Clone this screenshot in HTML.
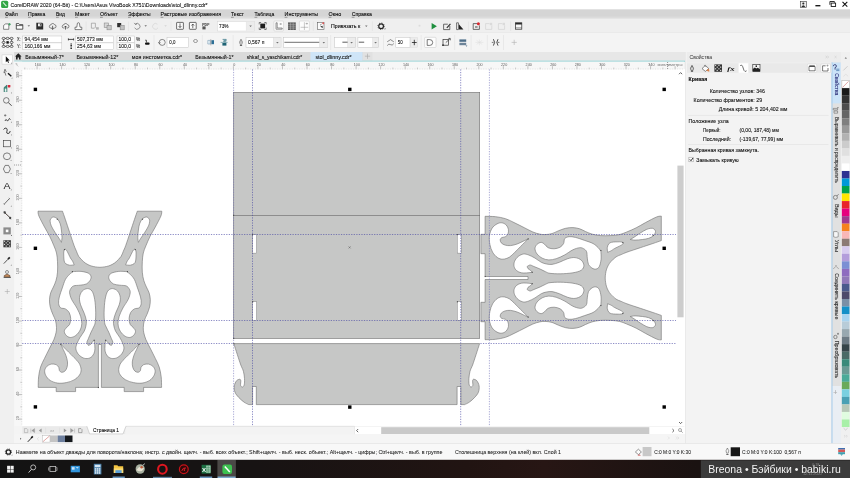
<!DOCTYPE html>
<html lang="ru"><head><meta charset="utf-8"><title>CorelDRAW 2020 - stol_dlinny.cdr</title>
<style>
html,body{margin:0;padding:0;background:#f0f0f0;}
body{width:850px;height:478px;overflow:hidden;position:relative;}
svg{position:absolute;left:0;top:0;display:block;will-change:transform;font-family:'Liberation Sans', sans-serif;}
text{white-space:pre;}
</style></head><body>
<svg width="850" height="478" viewBox="0 0 850 478">
<rect x="0.00" y="0.00" width="850.00" height="478.00" fill="#f0f0f0"/>
<rect x="0.00" y="0.00" width="850.00" height="9.40" fill="#ffffff"/>
<rect x="0.00" y="9.40" width="850.00" height="9.50" fill="#d5d5d5"/>
<rect x="0.00" y="16.20" width="850.00" height="1.00" fill="#d9d9d9"/>
<rect x="0.00" y="17.20" width="850.00" height="0.90" fill="#dedede"/>
<rect x="0.00" y="18.10" width="850.00" height="0.80" fill="#e6e6e6"/>
<rect x="0.00" y="18.90" width="850.00" height="13.60" fill="#efefef"/>
<rect x="0.00" y="32.50" width="850.00" height="19.50" fill="#f4f4f4"/>
<line x1="0.00" y1="32.50" x2="850.00" y2="32.50" stroke="#e2e2e2" stroke-width="0.50"/>
<rect x="14.10" y="52.00" width="671.00" height="8.70" fill="#e7e7e7"/>
<rect x="14.10" y="52.00" width="349.00" height="8.70" fill="#dadada"/>
<rect x="363.00" y="52.00" width="9.50" height="8.70" fill="#e1e1e1"/>
<rect x="14.10" y="60.70" width="671.00" height="1.00" fill="#86cfd3"/>
<rect x="0.00" y="52.00" width="14.10" height="392.00" fill="#f0f0f0"/>
<rect x="14.10" y="61.70" width="670.00" height="7.70" fill="#f7f7f7"/>
<rect x="14.10" y="61.70" width="8.10" height="365.00" fill="#f7f7f7"/>
<g id="canvas">
<rect x="22.20" y="69.40" width="663.10" height="357.20" fill="#ffffff"/>
<rect x="233.60" y="92.30" width="246.10" height="123.00" fill="#c6c7c6" stroke="#6e6e6e" stroke-width="0.60"/>
<rect x="233.60" y="215.30" width="246.10" height="123.10" fill="#c6c7c6" stroke="#6e6e6e" stroke-width="0.60"/>
<rect x="252.60" y="234.50" width="3.90" height="18.60" fill="#ffffff" stroke="#6e6e6e" stroke-width="0.40"/>
<rect x="252.60" y="301.70" width="3.90" height="18.70" fill="#ffffff" stroke="#6e6e6e" stroke-width="0.40"/>
<rect x="457.30" y="234.50" width="3.90" height="18.60" fill="#ffffff" stroke="#6e6e6e" stroke-width="0.40"/>
<rect x="457.30" y="301.70" width="3.90" height="18.70" fill="#ffffff" stroke="#6e6e6e" stroke-width="0.40"/>
<path d="M233.80 343.60 C234.38 345.42 236.13 350.93 237.30 354.50 C238.47 358.07 239.78 362.20 240.80 365.00 C241.82 367.80 242.78 369.03 243.40 371.30 C244.02 373.57 244.37 376.33 244.50 378.60 C244.63 380.87 244.55 383.50 244.20 384.90 C243.85 386.30 243.00 386.92 242.40 387.00 C241.80 387.08 240.87 386.45 240.60 385.40 C240.33 384.35 240.93 381.75 240.80 380.70 C240.67 379.65 239.97 379.37 239.80 379.10 C239.27 379.37 237.52 379.57 236.60 380.70 C235.68 381.83 234.57 383.98 234.30 385.90 C234.03 387.82 234.27 390.28 235.00 392.20 C235.73 394.12 237.20 395.75 238.70 397.40 C240.20 399.05 242.33 400.90 244.00 402.10 C245.67 403.30 247.92 404.18 248.70 404.60 L252.6 404.6 L252.6 386.5 L256.3 386.5 L256.3 404.6 L457.10 404.6 L457.10 386.5 L460.80 386.5 L460.80 404.6 L464.70 404.60 C465.48 404.18 467.73 403.30 469.40 402.10 C471.07 400.90 473.20 399.05 474.70 397.40 C476.20 395.75 477.67 394.12 478.40 392.20 C479.13 390.28 479.37 387.82 479.10 385.90 C478.83 383.98 477.72 381.83 476.80 380.70 C475.88 379.57 474.13 379.37 473.60 379.10 C473.43 379.37 472.73 379.65 472.60 380.70 C472.47 381.75 473.07 384.35 472.80 385.40 C472.53 386.45 471.60 387.08 471.00 387.00 C470.40 386.92 469.55 386.30 469.20 384.90 C468.85 383.50 468.77 380.87 468.90 378.60 C469.03 376.33 469.38 373.57 470.00 371.30 C470.62 369.03 471.58 367.80 472.60 365.00 C473.62 362.20 474.93 358.07 476.10 354.50 C477.27 350.93 479.02 345.42 479.60 343.60Z" fill="#c6c7c6" stroke="#6e6e6e" stroke-width="0.60"/>
<path id="orn" d="M62.50 211.20 C62.98 212.60 64.22 216.10 65.40 219.60 C66.58 223.10 68.15 227.87 69.60 232.20 C71.05 236.53 72.95 242.42 74.10 245.60 C75.25 248.78 75.72 249.48 76.50 251.30 C77.28 253.12 77.63 254.78 78.80 256.50 C79.97 258.22 82.13 260.33 83.50 261.60 C84.87 262.87 85.75 263.38 87.00 264.10 C88.25 264.82 89.58 265.43 91.00 265.90 C92.42 266.37 94.02 266.67 95.50 266.90 C96.98 267.13 98.43 267.30 99.90 267.30 C101.37 267.30 102.82 267.13 104.30 266.90 C105.78 266.67 107.38 266.37 108.80 265.90 C110.22 265.43 111.55 264.82 112.80 264.10 C114.05 263.38 114.93 262.87 116.30 261.60 C117.67 260.33 119.83 258.22 121.00 256.50 C122.17 254.78 122.52 253.12 123.30 251.30 C124.08 249.48 124.55 248.78 125.70 245.60 C126.85 242.42 128.75 236.53 130.20 232.20 C131.65 227.87 133.22 223.10 134.40 219.60 C135.58 216.10 136.82 212.60 137.30 211.20 L161.80 211.20 C161.65 212.00 161.98 213.37 160.90 216.00 C159.82 218.63 157.10 223.62 155.30 227.00 C153.50 230.38 151.67 233.17 150.10 236.30 C148.53 239.43 147.03 243.02 145.90 245.80 C144.77 248.58 143.90 250.35 143.30 253.00 C142.70 255.65 142.47 258.50 142.30 261.70 C142.13 264.90 142.05 269.07 142.30 272.20 C142.55 275.33 143.12 278.03 143.80 280.50 C144.48 282.97 145.52 284.95 146.40 287.00 C147.28 289.05 148.45 290.70 149.10 292.80 C149.75 294.90 150.22 297.25 150.30 299.60 C150.38 301.95 150.15 304.45 149.60 306.90 C149.05 309.35 147.88 312.03 147.00 314.30 C146.12 316.57 144.92 318.30 144.30 320.50 C143.68 322.70 143.38 325.45 143.30 327.50 C143.22 329.55 143.37 330.78 143.80 332.80 C144.23 334.82 144.85 337.07 145.90 339.60 C146.95 342.13 148.53 344.87 150.10 348.00 C151.67 351.13 153.78 355.23 155.30 358.40 C156.82 361.57 158.22 363.92 159.20 367.00 C160.18 370.08 160.80 373.50 161.20 376.90 C161.60 380.30 161.53 385.65 161.60 387.40 L143.60 387.40 L143.60 391.60 L124.20 391.60 L124.20 387.40 L101.40 387.40 L101.40 344.50 L98.40 344.50 L98.40 387.40 L75.60 387.40 L75.60 391.60 L56.20 391.60 L56.20 387.40 L38.20 387.40 C38.27 385.65 38.20 380.30 38.60 376.90 C39.00 373.50 39.62 370.08 40.60 367.00 C41.58 363.92 42.98 361.57 44.50 358.40 C46.02 355.23 48.13 351.13 49.70 348.00 C51.27 344.87 52.85 342.13 53.90 339.60 C54.95 337.07 55.57 334.82 56.00 332.80 C56.43 330.78 56.58 329.55 56.50 327.50 C56.42 325.45 56.12 322.70 55.50 320.50 C54.88 318.30 53.68 316.57 52.80 314.30 C51.92 312.03 50.75 309.35 50.20 306.90 C49.65 304.45 49.42 301.95 49.50 299.60 C49.58 297.25 50.05 294.90 50.70 292.80 C51.35 290.70 52.52 289.05 53.40 287.00 C54.28 284.95 55.32 282.97 56.00 280.50 C56.68 278.03 57.25 275.33 57.50 272.20 C57.75 269.07 57.67 264.90 57.50 261.70 C57.33 258.50 57.10 255.65 56.50 253.00 C55.90 250.35 55.03 248.58 53.90 245.80 C52.77 243.02 51.27 239.43 49.70 236.30 C48.13 233.17 46.30 230.38 44.50 227.00 C42.70 223.62 39.98 218.63 38.90 216.00 C37.82 213.37 38.15 212.00 38.00 211.20Z M53.40 217.00 C52.25 217.00 51.13 218.22 50.60 219.00 C50.07 219.78 50.08 220.55 50.20 221.70 C50.32 222.85 50.52 224.15 51.30 225.90 C52.08 227.65 53.60 230.12 54.90 232.20 C56.20 234.28 58.02 236.72 59.10 238.40 C60.18 240.08 61.02 241.65 61.40 242.30 C61.50 241.48 62.00 239.45 62.00 237.40 C62.00 235.35 61.70 232.27 61.40 230.00 C61.10 227.73 60.85 225.63 60.20 223.80 C59.55 221.97 58.63 220.13 57.50 219.00 C56.37 217.87 54.55 217.00 53.40 217.00Z M146.40 217.00 C147.55 217.00 148.67 218.22 149.20 219.00 C149.73 219.78 149.72 220.55 149.60 221.70 C149.48 222.85 149.28 224.15 148.50 225.90 C147.72 227.65 146.20 230.12 144.90 232.20 C143.60 234.28 141.78 236.72 140.70 238.40 C139.62 240.08 138.78 241.65 138.40 242.30 C138.30 241.48 137.80 239.45 137.80 237.40 C137.80 235.35 138.10 232.27 138.40 230.00 C138.70 227.73 138.95 225.63 139.60 223.80 C140.25 221.97 141.17 220.13 142.30 219.00 C143.43 217.87 145.25 217.00 146.40 217.00Z M64.30 249.60 C63.98 250.20 63.78 251.78 63.70 253.00 C63.62 254.22 63.72 255.57 63.80 256.90 C63.88 258.23 63.90 259.88 64.20 261.00 C64.50 262.12 64.73 262.90 65.60 263.60 C66.47 264.30 67.97 264.98 69.40 265.20 C70.83 265.42 73.40 264.95 74.20 264.90 C73.93 264.28 73.23 262.37 72.60 261.20 C71.97 260.03 71.28 259.50 70.40 257.90 C69.52 256.30 68.10 253.02 67.30 251.60 C66.50 250.18 66.10 249.73 65.60 249.40 C65.10 249.07 64.62 249.00 64.30 249.60Z M135.50 249.60 C135.82 250.20 136.02 251.78 136.10 253.00 C136.18 254.22 136.08 255.57 136.00 256.90 C135.92 258.23 135.90 259.88 135.60 261.00 C135.30 262.12 135.07 262.90 134.20 263.60 C133.33 264.30 131.83 264.98 130.40 265.20 C128.97 265.42 126.40 264.95 125.60 264.90 C125.87 264.28 126.57 262.37 127.20 261.20 C127.83 260.03 128.52 259.50 129.40 257.90 C130.28 256.30 131.70 253.02 132.50 251.60 C133.30 250.18 133.70 249.73 134.20 249.40 C134.70 249.07 135.18 249.00 135.50 249.60Z M73.20 271.60 C74.52 271.57 78.57 271.13 81.10 271.40 C83.63 271.67 86.75 272.35 88.40 273.20 C90.05 274.05 90.73 275.28 91.00 276.50 C91.27 277.72 90.78 279.25 90.00 280.50 C89.22 281.75 87.97 283.22 86.30 284.00 C84.63 284.78 82.12 284.88 80.00 285.20 C77.88 285.52 75.17 285.28 73.60 285.90 C72.03 286.52 71.27 287.75 70.60 288.90 C69.93 290.05 69.42 291.02 69.60 292.80 C69.78 294.58 70.48 297.07 71.70 299.60 C72.92 302.13 75.42 305.22 76.90 308.00 C78.38 310.78 79.78 313.68 80.60 316.30 C81.42 318.92 81.87 321.42 81.80 323.70 C81.73 325.98 81.18 328.05 80.20 330.00 C79.22 331.95 77.50 334.15 75.90 335.40 C74.30 336.65 72.18 337.47 70.60 337.50 C69.02 337.53 67.45 336.58 66.40 335.60 C65.35 334.62 64.40 332.82 64.30 331.60 C64.20 330.38 64.92 329.50 65.80 328.30 C66.68 327.10 68.78 326.05 69.60 324.40 C70.42 322.75 70.78 320.40 70.70 318.40 C70.62 316.40 69.98 313.98 69.10 312.40 C68.22 310.82 66.82 309.67 65.40 308.90 C63.98 308.13 61.73 308.70 60.60 307.80 C59.47 306.90 58.82 305.30 58.60 303.50 C58.38 301.70 58.68 299.60 59.30 297.00 C59.92 294.40 61.28 290.82 62.30 287.90 C63.32 284.98 64.18 281.77 65.40 279.50 C66.62 277.23 68.30 275.62 69.60 274.30 C70.90 272.98 72.60 272.05 73.20 271.60Z M126.60 271.60 C125.28 271.57 121.23 271.13 118.70 271.40 C116.17 271.67 113.05 272.35 111.40 273.20 C109.75 274.05 109.07 275.28 108.80 276.50 C108.53 277.72 109.02 279.25 109.80 280.50 C110.58 281.75 111.83 283.22 113.50 284.00 C115.17 284.78 117.68 284.88 119.80 285.20 C121.92 285.52 124.63 285.28 126.20 285.90 C127.77 286.52 128.53 287.75 129.20 288.90 C129.87 290.05 130.38 291.02 130.20 292.80 C130.02 294.58 129.32 297.07 128.10 299.60 C126.88 302.13 124.38 305.22 122.90 308.00 C121.42 310.78 120.02 313.68 119.20 316.30 C118.38 318.92 117.93 321.42 118.00 323.70 C118.07 325.98 118.62 328.05 119.60 330.00 C120.58 331.95 122.30 334.15 123.90 335.40 C125.50 336.65 127.62 337.47 129.20 337.50 C130.78 337.53 132.35 336.58 133.40 335.60 C134.45 334.62 135.40 332.82 135.50 331.60 C135.60 330.38 134.88 329.50 134.00 328.30 C133.12 327.10 131.02 326.05 130.20 324.40 C129.38 322.75 129.02 320.40 129.10 318.40 C129.18 316.40 129.82 313.98 130.70 312.40 C131.58 310.82 132.98 309.67 134.40 308.90 C135.82 308.13 138.07 308.70 139.20 307.80 C140.33 306.90 140.98 305.30 141.20 303.50 C141.42 301.70 141.12 299.60 140.50 297.00 C139.88 294.40 138.52 290.82 137.50 287.90 C136.48 284.98 135.62 281.77 134.40 279.50 C133.18 277.23 131.50 275.62 130.20 274.30 C128.90 272.98 127.20 272.05 126.60 271.60Z M87.40 288.60 C89.07 288.60 90.88 289.37 92.10 291.20 C93.32 293.03 94.10 296.10 94.70 299.60 C95.30 303.10 95.62 308.37 95.70 312.20 C95.78 316.03 95.55 320.13 95.20 322.60 C94.85 325.07 94.30 325.38 93.60 327.00 C92.90 328.62 91.87 330.37 91.00 332.30 C90.13 334.23 89.08 336.92 88.40 338.60 C87.72 340.28 86.90 341.27 86.90 342.40 C86.90 343.53 88.15 344.90 88.40 345.40 C88.75 345.25 89.85 345.08 90.50 344.50 C91.15 343.92 91.68 342.60 92.30 341.90 C92.92 341.20 93.88 340.57 94.20 340.30 C94.30 341.23 94.72 344.10 94.80 345.90 C94.88 347.70 95.07 349.45 94.70 351.10 C94.33 352.75 93.65 354.58 92.60 355.80 C91.55 357.02 89.97 358.05 88.40 358.40 C86.83 358.75 84.87 358.58 83.20 357.90 C81.53 357.22 79.62 355.78 78.40 354.30 C77.18 352.82 76.15 350.75 75.90 349.00 C75.65 347.25 76.22 345.72 76.90 343.80 C77.58 341.88 78.78 339.60 80.00 337.50 C81.22 335.40 83.22 333.12 84.20 331.20 C85.18 329.28 85.55 327.78 85.90 326.00 C86.25 324.22 86.58 322.63 86.30 320.50 C86.02 318.37 85.15 315.82 84.20 313.20 C83.25 310.58 81.38 307.42 80.60 304.80 C79.82 302.18 79.25 299.77 79.50 297.50 C79.75 295.23 80.78 292.68 82.10 291.20 C83.42 289.72 85.73 288.60 87.40 288.60Z M112.40 288.60 C110.73 288.60 108.92 289.37 107.70 291.20 C106.48 293.03 105.70 296.10 105.10 299.60 C104.50 303.10 104.18 308.37 104.10 312.20 C104.02 316.03 104.25 320.13 104.60 322.60 C104.95 325.07 105.50 325.38 106.20 327.00 C106.90 328.62 107.93 330.37 108.80 332.30 C109.67 334.23 110.72 336.92 111.40 338.60 C112.08 340.28 112.90 341.27 112.90 342.40 C112.90 343.53 111.65 344.90 111.40 345.40 C111.05 345.25 109.95 345.08 109.30 344.50 C108.65 343.92 108.12 342.60 107.50 341.90 C106.88 341.20 105.92 340.57 105.60 340.30 C105.50 341.23 105.08 344.10 105.00 345.90 C104.92 347.70 104.73 349.45 105.10 351.10 C105.47 352.75 106.15 354.58 107.20 355.80 C108.25 357.02 109.83 358.05 111.40 358.40 C112.97 358.75 114.93 358.58 116.60 357.90 C118.27 357.22 120.18 355.78 121.40 354.30 C122.62 352.82 123.65 350.75 123.90 349.00 C124.15 347.25 123.58 345.72 122.90 343.80 C122.22 341.88 121.02 339.60 119.80 337.50 C118.58 335.40 116.58 333.12 115.60 331.20 C114.62 329.28 114.25 327.78 113.90 326.00 C113.55 324.22 113.22 322.63 113.50 320.50 C113.78 318.37 114.65 315.82 115.60 313.20 C116.55 310.58 118.42 307.42 119.20 304.80 C119.98 302.18 120.55 299.77 120.30 297.50 C120.05 295.23 119.02 292.68 117.70 291.20 C116.38 289.72 114.07 288.60 112.40 288.60Z M60.80 344.30 C61.38 344.88 63.00 346.50 64.30 347.80 C65.60 349.10 66.97 350.47 68.60 352.10 C70.23 353.73 72.37 355.78 74.10 357.60 C75.83 359.42 77.83 361.02 79.00 363.00 C80.17 364.98 81.02 367.50 81.10 369.50 C81.18 371.50 80.67 373.27 79.50 375.00 C78.33 376.73 76.28 378.63 74.10 379.90 C71.92 381.17 69.13 382.07 66.40 382.60 C63.67 383.13 60.42 383.47 57.70 383.10 C54.98 382.73 52.08 381.67 50.10 380.40 C48.12 379.13 46.70 377.13 45.80 375.50 C44.90 373.87 44.52 372.13 44.70 370.60 C44.88 369.07 45.82 367.38 46.90 366.30 C47.98 365.22 49.67 364.38 51.20 364.10 C52.73 363.82 54.83 364.05 56.10 364.60 C57.37 365.15 58.25 366.40 58.80 367.40 C59.35 368.40 58.93 369.78 59.40 370.60 C59.87 371.42 60.70 372.20 61.60 372.30 C62.50 372.40 63.90 372.02 64.80 371.20 C65.70 370.38 66.55 368.95 67.00 367.40 C67.45 365.85 67.68 363.90 67.50 361.90 C67.32 359.90 66.62 357.48 65.90 355.40 C65.18 353.32 64.05 351.25 63.20 349.40 C62.35 347.55 61.20 345.15 60.80 344.30Z M139.00 344.30 C138.42 344.88 136.80 346.50 135.50 347.80 C134.20 349.10 132.83 350.47 131.20 352.10 C129.57 353.73 127.43 355.78 125.70 357.60 C123.97 359.42 121.97 361.02 120.80 363.00 C119.63 364.98 118.78 367.50 118.70 369.50 C118.62 371.50 119.13 373.27 120.30 375.00 C121.47 376.73 123.52 378.63 125.70 379.90 C127.88 381.17 130.67 382.07 133.40 382.60 C136.13 383.13 139.38 383.47 142.10 383.10 C144.82 382.73 147.72 381.67 149.70 380.40 C151.68 379.13 153.10 377.13 154.00 375.50 C154.90 373.87 155.28 372.13 155.10 370.60 C154.92 369.07 153.98 367.38 152.90 366.30 C151.82 365.22 150.13 364.38 148.60 364.10 C147.07 363.82 144.97 364.05 143.70 364.60 C142.43 365.15 141.55 366.40 141.00 367.40 C140.45 368.40 140.87 369.78 140.40 370.60 C139.93 371.42 139.10 372.20 138.20 372.30 C137.30 372.40 135.90 372.02 135.00 371.20 C134.10 370.38 133.25 368.95 132.80 367.40 C132.35 365.85 132.12 363.90 132.30 361.90 C132.48 359.90 133.18 357.48 133.90 355.40 C134.62 353.32 135.75 351.25 136.60 349.40 C137.45 347.55 138.60 345.15 139.00 344.30Z" fill="#c6c7c6" stroke="#6e6e6e" stroke-width="0.6" fill-rule="evenodd"/>
<use href="#orn" transform="translate(872.5 178.1) rotate(90)"/>
<line x1="22.20" y1="234.50" x2="676.00" y2="234.50" stroke="#4646a2" stroke-width="0.62" stroke-dasharray="1.25 1.3"/>
<line x1="22.20" y1="320.50" x2="676.00" y2="320.50" stroke="#4646a2" stroke-width="0.62" stroke-dasharray="1.25 1.3"/>
<line x1="22.20" y1="343.50" x2="233.40" y2="343.50" stroke="#4646a2" stroke-width="0.62" stroke-dasharray="1.25 1.3"/>
<line x1="480.40" y1="343.50" x2="676.00" y2="343.50" stroke="#4646a2" stroke-width="0.62" stroke-dasharray="1.25 1.3"/>
<line x1="233.60" y1="69.40" x2="233.60" y2="426.60" stroke="#7676bc" stroke-width="0.62" stroke-dasharray="1.25 1.3"/>
<line x1="252.50" y1="69.40" x2="252.50" y2="426.60" stroke="#4646a2" stroke-width="0.62" stroke-dasharray="1.25 1.3"/>
<line x1="460.70" y1="69.40" x2="460.70" y2="426.60" stroke="#4646a2" stroke-width="0.62" stroke-dasharray="1.25 1.3"/>
<line x1="489.40" y1="69.40" x2="489.40" y2="426.60" stroke="#7676bc" stroke-width="0.62" stroke-dasharray="1.25 1.3"/>
<rect x="33.70" y="87.70" width="3.40" height="3.40" fill="#000"/>
<rect x="348.10" y="87.70" width="3.40" height="3.40" fill="#000"/>
<rect x="662.50" y="87.70" width="3.40" height="3.40" fill="#000"/>
<rect x="33.70" y="246.60" width="3.40" height="3.40" fill="#000"/>
<rect x="662.50" y="246.60" width="3.40" height="3.40" fill="#000"/>
<rect x="33.70" y="405.20" width="3.40" height="3.40" fill="#000"/>
<rect x="348.10" y="405.40" width="3.40" height="3.40" fill="#000"/>
<rect x="662.50" y="405.30" width="3.40" height="3.40" fill="#000"/>
<rect x="233.05" y="214.75" width="1.10" height="1.10" fill="#4a4a4a"/>
<rect x="252.15" y="234.05" width="1.10" height="1.10" fill="#4a4a4a"/>
<rect x="456.85" y="234.05" width="1.10" height="1.10" fill="#4a4a4a"/>
<rect x="252.15" y="301.25" width="1.10" height="1.10" fill="#4a4a4a"/>
<rect x="456.85" y="301.25" width="1.10" height="1.10" fill="#4a4a4a"/>
<rect x="233.15" y="337.85" width="1.10" height="1.10" fill="#4a4a4a"/>
<rect x="233.25" y="343.15" width="1.10" height="1.10" fill="#4a4a4a"/>
<rect x="97.85" y="386.95" width="1.10" height="1.10" fill="#4a4a4a"/>
<rect x="484.65" y="275.95" width="1.10" height="1.10" fill="#4a4a4a"/>
<rect x="60.25" y="343.75" width="1.10" height="1.10" fill="#4a4a4a"/>
<rect x="138.45" y="343.75" width="1.10" height="1.10" fill="#4a4a4a"/>
<rect x="63.95" y="249.05" width="1.10" height="1.10" fill="#4a4a4a"/>
<rect x="134.75" y="249.05" width="1.10" height="1.10" fill="#4a4a4a"/>
<rect x="71.85" y="271.05" width="1.10" height="1.10" fill="#4a4a4a"/>
<rect x="126.85" y="271.05" width="1.10" height="1.10" fill="#4a4a4a"/>
<rect x="93.65" y="339.75" width="1.10" height="1.10" fill="#4a4a4a"/>
<rect x="105.05" y="339.75" width="1.10" height="1.10" fill="#4a4a4a"/>
<rect x="56.75" y="218.65" width="1.10" height="1.10" fill="#4a4a4a"/>
<rect x="141.95" y="218.65" width="1.10" height="1.10" fill="#4a4a4a"/>
<rect x="527.65" y="238.35" width="1.10" height="1.10" fill="#4a4a4a"/>
<rect x="527.65" y="316.55" width="1.10" height="1.10" fill="#4a4a4a"/>
<rect x="622.25" y="242.05" width="1.10" height="1.10" fill="#4a4a4a"/>
<rect x="622.25" y="312.85" width="1.10" height="1.10" fill="#4a4a4a"/>
<rect x="600.35" y="249.95" width="1.10" height="1.10" fill="#4a4a4a"/>
<rect x="600.35" y="304.95" width="1.10" height="1.10" fill="#4a4a4a"/>
<rect x="531.65" y="271.75" width="1.10" height="1.10" fill="#4a4a4a"/>
<rect x="531.65" y="283.15" width="1.10" height="1.10" fill="#4a4a4a"/>
<rect x="652.65" y="234.85" width="1.10" height="1.10" fill="#4a4a4a"/>
<rect x="652.65" y="320.05" width="1.10" height="1.10" fill="#4a4a4a"/>
<path d="M348.6 246.4 l2 2 m0 -2 l-2 2" fill="none" stroke="#555" stroke-width="0.50"/>
</g>
<rect x="676.30" y="69.40" width="9.00" height="357.00" fill="#ffffff"/>
<rect x="677.40" y="165.60" width="6.20" height="151.70" fill="#cdcdcd"/>
<rect x="22.20" y="426.20" width="662.00" height="8.00" fill="#eaeaea"/>
<rect x="14.10" y="426.20" width="8.10" height="8.00" fill="#f4f4f4"/>
<rect x="125.20" y="426.20" width="229.30" height="8.00" fill="#f3f3f3"/>
<rect x="354.50" y="426.60" width="330.80" height="7.60" fill="#ffffff"/>
<rect x="381.20" y="427.20" width="268.10" height="6.80" fill="#c9c9c9"/>
<rect x="14.10" y="434.20" width="671.20" height="9.30" fill="#f5f5f5"/>
<line x1="125.20" y1="426.30" x2="354.50" y2="426.30" stroke="#cfcfcf" stroke-width="0.45"/>
<line x1="354.50" y1="426.20" x2="354.50" y2="434.20" stroke="#d8d8d8" stroke-width="0.40"/>
<rect x="685.30" y="52.00" width="146.30" height="391.50" fill="#f3f3f3"/>
<line x1="685.50" y1="52.00" x2="685.50" y2="443.50" stroke="#e0e0e0" stroke-width="0.50"/>
<rect x="686.80" y="52.00" width="154.40" height="10.60" fill="#ececec"/>
<rect x="831.60" y="62.50" width="9.60" height="381.00" fill="#e1e1e1"/>
<rect x="831.60" y="62.50" width="9.60" height="40.90" fill="#cbe3f8"/>
<rect x="831.60" y="386.00" width="9.60" height="57.50" fill="#e9eef4"/>
<line x1="832.00" y1="62.50" x2="832.00" y2="443.50" stroke="#a5cbea" stroke-width="1.00"/>
<rect x="840.80" y="52.00" width="9.20" height="391.50" fill="#f0f0f0"/>
<rect x="0.00" y="443.50" width="850.00" height="16.30" fill="#f8f8f8"/>
<line x1="0.00" y1="443.50" x2="850.00" y2="443.50" stroke="#dcdcdc" stroke-width="0.50"/>
<defs><linearGradient id="tb" x1="0" y1="0" x2="1" y2="0"><stop offset="0" stop-color="#131313"/><stop offset="0.3" stop-color="#171313"/><stop offset="0.55" stop-color="#211412"/><stop offset="0.64" stop-color="#271614"/><stop offset="0.82" stop-color="#1a1211"/><stop offset="1" stop-color="#151212"/></linearGradient></defs>
<rect x="0.00" y="459.80" width="850.00" height="18.20" fill="url(#tb)"/>
<rect x="700.80" y="460.30" width="149.20" height="17.70" fill="#3b3b3b"/>
<rect x="841.90" y="80.60" width="7.50" height="7.53" fill="#ffffff" stroke="#999" stroke-width="0.40"/>
<line x1="842.60" y1="87.33" x2="848.50" y2="81.40" stroke="#c0504d" stroke-width="0.50"/>
<rect x="841.80" y="88.13" width="7.70" height="7.58" fill="#1a1a1a"/>
<rect x="841.80" y="95.66" width="7.70" height="7.58" fill="#333333"/>
<rect x="841.80" y="103.19" width="7.70" height="7.58" fill="#4d4d4d"/>
<rect x="841.80" y="110.72" width="7.70" height="7.58" fill="#666666"/>
<rect x="841.80" y="118.25" width="7.70" height="7.58" fill="#7f7f7f"/>
<rect x="841.80" y="125.78" width="7.70" height="7.58" fill="#999999"/>
<rect x="841.80" y="133.31" width="7.70" height="7.58" fill="#b2b2b2"/>
<rect x="841.80" y="140.84" width="7.70" height="7.58" fill="#cccccc"/>
<rect x="841.80" y="148.37" width="7.70" height="7.58" fill="#e0e0e0"/>
<rect x="841.80" y="155.90" width="7.70" height="7.58" fill="#eeeeee"/>
<rect x="841.80" y="163.43" width="7.70" height="7.58" fill="#ffffff"/>
<rect x="841.80" y="170.96" width="7.70" height="7.58" fill="#2e3192"/>
<rect x="841.80" y="178.49" width="7.70" height="7.58" fill="#0099d8"/>
<rect x="841.80" y="186.02" width="7.70" height="7.58" fill="#00a14b"/>
<rect x="841.80" y="193.55" width="7.70" height="7.58" fill="#ffe600"/>
<rect x="841.80" y="201.08" width="7.70" height="7.58" fill="#e8262a"/>
<rect x="841.80" y="208.61" width="7.70" height="7.58" fill="#e6007e"/>
<rect x="841.80" y="216.14" width="7.70" height="7.58" fill="#a0398f"/>
<rect x="841.80" y="223.67" width="7.70" height="7.58" fill="#f5821f"/>
<rect x="841.80" y="231.20" width="7.70" height="7.58" fill="#f9b7b7"/>
<rect x="841.80" y="238.73" width="7.70" height="7.58" fill="#8c7b75"/>
<rect x="841.80" y="246.26" width="7.70" height="7.58" fill="#d8ccf0"/>
<rect x="841.80" y="253.79" width="7.70" height="7.58" fill="#b39ddb"/>
<rect x="841.80" y="261.32" width="7.70" height="7.58" fill="#7b8fd4"/>
<rect x="841.80" y="268.85" width="7.70" height="7.58" fill="#8e6bbf"/>
<rect x="841.80" y="276.38" width="7.70" height="7.58" fill="#9078b8"/>
<rect x="841.80" y="283.91" width="7.70" height="7.58" fill="#4a5a8c"/>
<rect x="841.80" y="291.44" width="7.70" height="7.58" fill="#4d4a6b"/>
<rect x="841.80" y="298.97" width="7.70" height="7.58" fill="#7a8fa6"/>
<rect x="841.80" y="306.50" width="7.70" height="7.58" fill="#1490c8"/>
<rect x="841.80" y="314.03" width="7.70" height="7.58" fill="#a8d4f0"/>
<rect x="841.80" y="321.56" width="7.70" height="7.58" fill="#b8ccd8"/>
<rect x="841.80" y="329.09" width="7.70" height="7.58" fill="#98a8b0"/>
<rect x="841.80" y="336.62" width="7.70" height="7.58" fill="#6c7a84"/>
<rect x="841.80" y="344.15" width="7.70" height="7.58" fill="#36454a"/>
<rect x="841.80" y="351.68" width="7.70" height="7.58" fill="#4a6a66"/>
<rect x="841.80" y="359.21" width="7.70" height="7.58" fill="#3a8a7a"/>
<rect x="841.80" y="366.74" width="7.70" height="7.58" fill="#6a9a94"/>
<rect x="841.80" y="374.27" width="7.70" height="7.58" fill="#4aaa98"/>
<rect x="841.80" y="381.80" width="7.70" height="7.58" fill="#6aaa5a"/>
<rect x="841.80" y="389.33" width="7.70" height="7.58" fill="#7ad0e0"/>
<rect x="841.80" y="396.86" width="7.70" height="7.58" fill="#4aa0b4"/>
<rect x="841.80" y="404.39" width="7.70" height="7.58" fill="#b8c8b8"/>
<rect x="841.80" y="411.92" width="7.70" height="7.58" fill="#e0fce0"/>
<rect x="841.80" y="419.45" width="7.70" height="7.58" fill="#a8f0a8"/>
<text x="10.60" y="7.10" font-size="5.90" fill="#141414" stroke="#141414" stroke-width="0.10" textLength="197.00" lengthAdjust="spacingAndGlyphs">CorelDRAW 2020 (64-Bit) - C:\Users\Asus VivoBook X751\Downloads\stol_dlinny.cdr*</text>
<text x="5.00" y="16.30" font-size="5.60" fill="#0a0a0a" stroke="#0a0a0a" stroke-width="0.10" textLength="12.80" lengthAdjust="spacingAndGlyphs">Файл</text>
<line x1="5.00" y1="17.30" x2="7.80" y2="17.30" stroke="#141414" stroke-width="0.35"/>
<text x="28.00" y="16.30" font-size="5.60" fill="#0a0a0a" stroke="#0a0a0a" stroke-width="0.10" textLength="17.30" lengthAdjust="spacingAndGlyphs">Правка</text>
<line x1="28.00" y1="17.30" x2="30.80" y2="17.30" stroke="#141414" stroke-width="0.35"/>
<text x="56.00" y="16.30" font-size="5.60" fill="#0a0a0a" stroke="#0a0a0a" stroke-width="0.10" textLength="9.00" lengthAdjust="spacingAndGlyphs">Вид</text>
<line x1="56.00" y1="17.30" x2="58.80" y2="17.30" stroke="#141414" stroke-width="0.35"/>
<text x="75.00" y="16.30" font-size="5.60" fill="#0a0a0a" stroke="#0a0a0a" stroke-width="0.10" textLength="14.80" lengthAdjust="spacingAndGlyphs">Макет</text>
<line x1="75.00" y1="17.30" x2="77.80" y2="17.30" stroke="#141414" stroke-width="0.35"/>
<text x="100.00" y="16.30" font-size="5.60" fill="#0a0a0a" stroke="#0a0a0a" stroke-width="0.10" textLength="17.80" lengthAdjust="spacingAndGlyphs">Объект</text>
<line x1="100.00" y1="17.30" x2="102.80" y2="17.30" stroke="#141414" stroke-width="0.35"/>
<text x="128.00" y="16.30" font-size="5.60" fill="#0a0a0a" stroke="#0a0a0a" stroke-width="0.10" textLength="22.50" lengthAdjust="spacingAndGlyphs">Эффекты</text>
<line x1="128.00" y1="17.30" x2="130.80" y2="17.30" stroke="#141414" stroke-width="0.35"/>
<text x="160.60" y="16.30" font-size="5.60" fill="#0a0a0a" stroke="#0a0a0a" stroke-width="0.10" textLength="60.40" lengthAdjust="spacingAndGlyphs">Растровые изображения</text>
<line x1="160.60" y1="17.30" x2="163.40" y2="17.30" stroke="#141414" stroke-width="0.35"/>
<text x="231.00" y="16.30" font-size="5.60" fill="#0a0a0a" stroke="#0a0a0a" stroke-width="0.10" textLength="12.80" lengthAdjust="spacingAndGlyphs">Текст</text>
<line x1="231.00" y1="17.30" x2="233.80" y2="17.30" stroke="#141414" stroke-width="0.35"/>
<text x="254.50" y="16.30" font-size="5.60" fill="#0a0a0a" stroke="#0a0a0a" stroke-width="0.10" textLength="19.70" lengthAdjust="spacingAndGlyphs">Таблица</text>
<line x1="254.50" y1="17.30" x2="257.30" y2="17.30" stroke="#141414" stroke-width="0.35"/>
<text x="284.60" y="16.30" font-size="5.60" fill="#0a0a0a" stroke="#0a0a0a" stroke-width="0.10" textLength="33.60" lengthAdjust="spacingAndGlyphs">Инструменты</text>
<line x1="284.60" y1="17.30" x2="287.40" y2="17.30" stroke="#141414" stroke-width="0.35"/>
<text x="328.60" y="16.30" font-size="5.60" fill="#0a0a0a" stroke="#0a0a0a" stroke-width="0.10" textLength="12.60" lengthAdjust="spacingAndGlyphs">Окно</text>
<line x1="328.60" y1="17.30" x2="331.40" y2="17.30" stroke="#141414" stroke-width="0.35"/>
<text x="351.70" y="16.30" font-size="5.60" fill="#0a0a0a" stroke="#0a0a0a" stroke-width="0.10" textLength="20.30" lengthAdjust="spacingAndGlyphs">Справка</text>
<line x1="351.70" y1="17.30" x2="354.50" y2="17.30" stroke="#141414" stroke-width="0.35"/>
<rect x="217.60" y="21.70" width="36.60" height="9.30" fill="#ffffff" stroke="#cfcfcf" stroke-width="0.40"/>
<text x="219.00" y="27.90" font-size="5.50" fill="#141414" stroke="#141414" stroke-width="0.10" textLength="9.60" lengthAdjust="spacingAndGlyphs">73%</text>
<text x="331.00" y="27.90" font-size="5.30" fill="#0a0a0a" stroke="#0a0a0a" stroke-width="0.10" textLength="29.20" lengthAdjust="spacingAndGlyphs">Привязать к</text>
<rect x="22.70" y="36.00" width="39.10" height="6.90" fill="#ffffff" stroke="#bdbdbd" stroke-width="0.45"/>
<rect x="22.70" y="42.90" width="39.10" height="6.70" fill="#ffffff" stroke="#bdbdbd" stroke-width="0.45"/>
<rect x="75.50" y="36.00" width="38.20" height="6.90" fill="#ffffff" stroke="#bdbdbd" stroke-width="0.45"/>
<rect x="75.50" y="42.90" width="38.20" height="6.70" fill="#ffffff" stroke="#bdbdbd" stroke-width="0.45"/>
<rect x="117.00" y="36.00" width="17.30" height="6.90" fill="#ffffff" stroke="#bdbdbd" stroke-width="0.45"/>
<rect x="117.00" y="42.90" width="17.30" height="6.70" fill="#ffffff" stroke="#bdbdbd" stroke-width="0.45"/>
<text x="17.00" y="41.30" font-size="5.40" fill="#2a2a2a" stroke="#2a2a2a" stroke-width="0.10" textLength="3.60" lengthAdjust="spacingAndGlyphs">X:</text>
<text x="17.00" y="48.20" font-size="5.40" fill="#2a2a2a" stroke="#2a2a2a" stroke-width="0.10" textLength="3.60" lengthAdjust="spacingAndGlyphs">Y:</text>
<text x="24.50" y="41.30" font-size="5.40" fill="#141414" stroke="#141414" stroke-width="0.10" textLength="23.50" lengthAdjust="spacingAndGlyphs">94,454 мм</text>
<text x="24.50" y="48.20" font-size="5.40" fill="#141414" stroke="#141414" stroke-width="0.10" textLength="26.00" lengthAdjust="spacingAndGlyphs">160,166 мм</text>
<text x="77.00" y="41.30" font-size="5.40" fill="#141414" stroke="#141414" stroke-width="0.10" textLength="26.00" lengthAdjust="spacingAndGlyphs">507,373 мм</text>
<text x="77.00" y="48.20" font-size="5.40" fill="#141414" stroke="#141414" stroke-width="0.10" textLength="24.00" lengthAdjust="spacingAndGlyphs">254,63 мм</text>
<text x="118.60" y="41.30" font-size="5.40" fill="#141414" stroke="#141414" stroke-width="0.10" textLength="12.40" lengthAdjust="spacingAndGlyphs">100,0</text>
<text x="118.60" y="48.20" font-size="5.40" fill="#141414" stroke="#141414" stroke-width="0.10" textLength="12.40" lengthAdjust="spacingAndGlyphs">100,0</text>
<text x="136.00" y="41.30" font-size="5.40" fill="#2a2a2a" stroke="#2a2a2a" stroke-width="0.10" textLength="4.20" lengthAdjust="spacingAndGlyphs">%</text>
<text x="136.00" y="48.20" font-size="5.40" fill="#2a2a2a" stroke="#2a2a2a" stroke-width="0.10" textLength="4.20" lengthAdjust="spacingAndGlyphs">%</text>
<rect x="167.00" y="37.50" width="21.60" height="9.90" fill="#ffffff" stroke="#bdbdbd" stroke-width="0.45"/>
<text x="169.30" y="44.30" font-size="5.40" fill="#141414" stroke="#141414" stroke-width="0.10" textLength="6.10" lengthAdjust="spacingAndGlyphs">0,0</text>
<rect x="246.00" y="37.50" width="34.00" height="9.90" fill="#ffffff" stroke="#bdbdbd" stroke-width="0.45"/>
<text x="248.00" y="44.30" font-size="5.40" fill="#141414" stroke="#141414" stroke-width="0.10" textLength="16.40" lengthAdjust="spacingAndGlyphs">0,567 п</text>
<rect x="283.60" y="37.50" width="44.20" height="9.90" fill="#ffffff" stroke="#bdbdbd" stroke-width="0.45"/>
<rect x="334.70" y="37.50" width="20.60" height="9.90" fill="#ffffff" stroke="#bdbdbd" stroke-width="0.45"/>
<rect x="357.90" y="37.50" width="20.30" height="9.90" fill="#ffffff" stroke="#bdbdbd" stroke-width="0.45"/>
<rect x="395.80" y="37.50" width="14.20" height="9.90" fill="#ffffff" stroke="#bdbdbd" stroke-width="0.45"/>
<text x="397.80" y="44.30" font-size="5.40" fill="#141414" stroke="#141414" stroke-width="0.10" textLength="4.90" lengthAdjust="spacingAndGlyphs">50</text>
<rect x="310.50" y="52.00" width="52.00" height="8.60" fill="#cfe5f8"/>
<text x="25.20" y="58.50" font-size="5.50" fill="#141414" stroke="#141414" stroke-width="0.10" textLength="38.70" lengthAdjust="spacingAndGlyphs">Безымянный-7*</text>
<text x="76.60" y="58.50" font-size="5.50" fill="#141414" stroke="#141414" stroke-width="0.10" textLength="41.70" lengthAdjust="spacingAndGlyphs">Безымянный-12*</text>
<text x="131.80" y="58.50" font-size="5.50" fill="#141414" stroke="#141414" stroke-width="0.10" textLength="50.20" lengthAdjust="spacingAndGlyphs">моя инстометка.cdr*</text>
<text x="195.20" y="58.50" font-size="5.50" fill="#141414" stroke="#141414" stroke-width="0.10" textLength="38.40" lengthAdjust="spacingAndGlyphs">Безымянный-1*</text>
<text x="246.80" y="58.50" font-size="5.50" fill="#141414" stroke="#141414" stroke-width="0.10" textLength="55.40" lengthAdjust="spacingAndGlyphs">shkaf_s_yaschikami.cdr*</text>
<text x="315.40" y="58.50" font-size="5.50" fill="#141414" stroke="#141414" stroke-width="0.10" textLength="36.30" lengthAdjust="spacingAndGlyphs">stol_dlinny.cdr*</text>
<path d="M364.9 56.2 h5.2 M367.5 53.6 v5.2" fill="none" stroke="#a8a8a8" stroke-width="0.60"/>
<text x="689.60" y="59.00" font-size="5.30" fill="#2e2e2e" textLength="22.40" lengthAdjust="spacingAndGlyphs">Свойства</text>
<text x="688.60" y="81.40" font-size="5.30" fill="#0a0a0a" stroke="#0a0a0a" stroke-width="0.10" textLength="18.60" lengthAdjust="spacingAndGlyphs" font-weight="bold">Кривая</text>
<text x="709.70" y="92.90" font-size="5.35" fill="#141414" stroke="#141414" stroke-width="0.10" textLength="55.30" lengthAdjust="spacingAndGlyphs">Количество узлов: 346</text>
<text x="693.60" y="101.50" font-size="5.35" fill="#141414" stroke="#141414" stroke-width="0.10" textLength="68.60" lengthAdjust="spacingAndGlyphs">Количество фрагментов: 29</text>
<text x="718.70" y="110.60" font-size="5.35" fill="#141414" stroke="#141414" stroke-width="0.10" textLength="68.70" lengthAdjust="spacingAndGlyphs">Длина кривой: 5 204,402 мм</text>
<line x1="688.00" y1="115.40" x2="828.50" y2="115.40" stroke="#dcdcdc" stroke-width="0.50"/>
<text x="688.60" y="122.90" font-size="5.35" fill="#141414" stroke="#141414" stroke-width="0.10" textLength="40.10" lengthAdjust="spacingAndGlyphs">Положение узла</text>
<text x="703.00" y="131.70" font-size="5.35" fill="#141414" stroke="#141414" stroke-width="0.10" textLength="17.40" lengthAdjust="spacingAndGlyphs">Первый:</text>
<text x="739.50" y="131.70" font-size="5.35" fill="#141414" stroke="#141414" stroke-width="0.10" textLength="39.50" lengthAdjust="spacingAndGlyphs">(0,00, 187,48) мм</text>
<text x="703.00" y="140.70" font-size="5.35" fill="#141414" stroke="#141414" stroke-width="0.10" textLength="28.00" lengthAdjust="spacingAndGlyphs">Последний:</text>
<text x="739.50" y="140.70" font-size="5.35" fill="#141414" stroke="#141414" stroke-width="0.10" textLength="43.80" lengthAdjust="spacingAndGlyphs">(-139,67, 77,99) мм</text>
<line x1="688.00" y1="144.50" x2="828.50" y2="144.50" stroke="#dcdcdc" stroke-width="0.50"/>
<text x="688.60" y="152.40" font-size="5.35" fill="#141414" stroke="#141414" stroke-width="0.10" textLength="70.30" lengthAdjust="spacingAndGlyphs">Выбранная кривая замкнута.</text>
<rect x="688.90" y="157.20" width="4.60" height="4.60" fill="#ffffff" stroke="#8a8a8a" stroke-width="0.45"/>
<path d="M689.8 159.4 l1.2 1.3 l2.0 -2.7" fill="none" stroke="#000" stroke-width="0.85"/>
<text x="696.30" y="161.50" font-size="5.35" fill="#141414" stroke="#141414" stroke-width="0.10" textLength="42.50" lengthAdjust="spacingAndGlyphs">Замыкать кривую</text>
<text transform="translate(834.50 73.30) rotate(90)" font-size="5.30" fill="#2a2d78" stroke="#2a2d78" stroke-width="0.12" textLength="22.00" lengthAdjust="spacingAndGlyphs">Свойства</text>
<text transform="translate(834.50 117.00) rotate(90)" font-size="5.30" fill="#333" stroke="#333" stroke-width="0.12" textLength="66.00" lengthAdjust="spacingAndGlyphs">Выравнивать и распределить</text>
<text transform="translate(834.50 203.90) rotate(90)" font-size="5.30" fill="#333" stroke="#333" stroke-width="0.12" textLength="13.60" lengthAdjust="spacingAndGlyphs">Виды</text>
<text transform="translate(834.50 239.70) rotate(90)" font-size="5.30" fill="#333" stroke="#333" stroke-width="0.12" textLength="12.30" lengthAdjust="spacingAndGlyphs">Углы</text>
<text transform="translate(834.50 273.20) rotate(90)" font-size="5.30" fill="#333" stroke="#333" stroke-width="0.12" textLength="46.20" lengthAdjust="spacingAndGlyphs">Соединить кривые</text>
<text transform="translate(834.50 340.80) rotate(90)" font-size="5.30" fill="#333" stroke="#333" stroke-width="0.12" textLength="37.40" lengthAdjust="spacingAndGlyphs">Преобразовать</text>
<text x="833.20" y="395.20" font-size="7.00" fill="#aaa" stroke="#aaa" stroke-width="0.10">+</text>
<text x="15.80" y="454.20" font-size="5.20" fill="#141414" stroke="#141414" stroke-width="0.04" textLength="426.60" lengthAdjust="spacingAndGlyphs">Нажмите на объект дважды для поворота/наклона; инстр. с двойн. щелч. - выб. всех объект.; Shift+щелч. - выб. неск. объект.; Alt+щелч. - цифры; Ctrl+щелч. - выб. в группе</text>
<text x="455.00" y="454.20" font-size="5.20" fill="#141414" stroke="#141414" stroke-width="0.04" textLength="106.00" lengthAdjust="spacingAndGlyphs">Столешница верхняя (на клей) вкл. Слой 1</text>
<text x="654.20" y="454.00" font-size="5.20" fill="#141414" stroke="#141414" stroke-width="0.04" textLength="36.70" lengthAdjust="spacingAndGlyphs">C:0 M:0 Y:0 K:30</text>
<text x="742.00" y="454.00" font-size="5.20" fill="#141414" stroke="#141414" stroke-width="0.04" textLength="58.80" lengthAdjust="spacingAndGlyphs">C:0 M:0 Y:0 K:100  0,567 п</text>
<rect x="642.60" y="447.00" width="8.90" height="9.20" fill="#c8c8c8"/>
<rect x="730.70" y="447.30" width="9.30" height="8.90" fill="#161616"/>
<path d="M86.6 425.8 L89.6 433.9 L123.0 433.9 L126.2 425.8 Z" fill="#ffffff"/>
<path d="M86.8 426.2 L89.6 433.9 L123.0 433.9 L126.0 426.2" fill="none" stroke="#a9a9a9" stroke-width="0.45"/>
<text x="93.00" y="432.40" font-size="5.30" fill="#0a0a0a" stroke="#0a0a0a" stroke-width="0.10" textLength="26.00" lengthAdjust="spacingAndGlyphs">Страница 1</text>
<rect x="42.50" y="435.50" width="7.50" height="6.60" fill="#ffffff" stroke="#aaa" stroke-width="0.40"/>
<line x1="43.00" y1="441.60" x2="49.50" y2="436.00" stroke="#c0504d" stroke-width="0.50"/>
<rect x="50.00" y="435.50" width="7.70" height="6.60" fill="#c4c4c4"/>
<rect x="57.70" y="435.50" width="7.30" height="6.60" fill="#6d7f9e"/>
<rect x="65.00" y="435.50" width="7.50" height="6.60" fill="#14181c"/>
<text x="708.30" y="472.90" font-size="10.40" fill="#f4f4f4" textLength="132.40" lengthAdjust="spacingAndGlyphs">Breona • Бэйбики • babiki.ru</text>
<rect x="1.10" y="0.70" width="7.10" height="7.20" fill="#32a645" rx="1.50"/>
<path d="M3 2.4 L6.4 6.2" fill="none" stroke="#d8f2dc" stroke-width="1.10"/>
<rect x="800.30" y="1.30" width="6.00" height="6.00" fill="#ececec" stroke="#3c3c3c" stroke-width="0.60"/>
<circle cx="803.3" cy="3.5" r="1.05" fill="#2a2a2a"/>
<path d="M801.3 7.0 q2.0 -3.4 4.0 0 z" fill="#2a2a2a"/>
<rect x="815.40" y="5.00" width="5.00" height="1.40" fill="#1a1a1a"/>
<rect x="831.20" y="3.10" width="4.40" height="3.40" fill="#ffffff" stroke="#1a1a1a" stroke-width="0.90"/>
<path d="M829.9 4.8 V1.5 H834.4 V2.7" fill="none" stroke="#1a1a1a" stroke-width="0.90"/>
<path d="M842.5 1.8 l4.8 4.8 m0 -4.8 l-4.8 4.8" fill="none" stroke="#111" stroke-width="1.05"/>
<path d="M3.6 29.3 V25.4 L5.6 23.9 H8.8 V29.3 Z" fill="#fdfdfd" stroke="#3a3a3a" stroke-width="0.60"/>
<path d="M8.3 24.3 h2.6 M9.6 23 v2.6" fill="none" stroke="#2e9e57" stroke-width="0.80"/>
<path d="M16.3 29.2 V23.6 H18.8 L19.6 24.6 H22.8 V29.2 Z" fill="#fff" stroke="#2f2f2f" stroke-width="0.80"/>
<path d="M16.3 25.6 H22.8" fill="none" stroke="#2f2f2f" stroke-width="0.70"/>
<path d="M27.54 25.37 l2.52 0 l-1.26 1.47 z" fill="#707070"/>
<path d="M36.3 22.8 H42.2 L43.2 23.8 V29.4 H36.3 Z" fill="#2d2d2d"/>
<rect x="38.00" y="23.50" width="3.40" height="2.80" fill="#f2f2f2"/>
<rect x="39.90" y="23.80" width="0.90" height="1.90" fill="#2d2d2d"/>
<path d="M51.60 28.0 H50.70 a1.35 1.5 0 0 1 0 -3.0 a2.1 2.1 0 0 1 3.9 -0.3 a1.4 1.6 0 0 1 0 3.3 H53.60" fill="none" stroke="#3a3a3a" stroke-width="0.60"/>
<path d="M52.60 25.8 v3.5 m-1.1 -1.1 l1.1 1.2 l1.1 -1.2" fill="none" stroke="#222" stroke-width="0.65"/>
<path d="M64.50 28.0 H63.60 a1.35 1.5 0 0 1 0 -3.0 a2.1 2.1 0 0 1 3.9 -0.3 a1.4 1.6 0 0 1 0 3.3 H66.50" fill="none" stroke="#3a3a3a" stroke-width="0.60"/>
<path d="M65.50 29.6 v-3.5 m-1.1 1.1 l1.1 -1.2 l1.1 1.2" fill="none" stroke="#222" stroke-width="0.65"/>
<path d="M75 29.6 h6.8 v-2.4 h-1.8 l-0.5 -3.4 a1.1 1.1 0 0 0 -2.2 0 l-0.5 3.4 h-1.8 z" fill="#fafafa" stroke="#333" stroke-width="0.60"/>
<line x1="86.10" y1="21.50" x2="86.10" y2="31.00" stroke="#dcdcdc" stroke-width="0.50"/>
<path d="M91.4 23.2 h4 v4 l-1 1 h-3 z" fill="#f0f0f0" stroke="#8a8a8a" stroke-width="0.60"/>
<rect x="96.00" y="27.20" width="2.80" height="2.40" fill="#b5b5b5"/>
<rect x="104.20" y="23.00" width="4.20" height="4.40" fill="#d8d8d8" stroke="#8a8a8a" stroke-width="0.60"/>
<rect x="107.00" y="25.60" width="4.20" height="4.20" fill="#c9c9c9" stroke="#8a8a8a" stroke-width="0.60"/>
<rect x="117.20" y="23.00" width="4.00" height="4.20" fill="#2f2f2f"/>
<rect x="120.20" y="25.60" width="4.00" height="4.20" fill="#c2c2c2" stroke="#8a8a8a" stroke-width="0.60"/>
<line x1="128.50" y1="21.50" x2="128.50" y2="31.00" stroke="#dcdcdc" stroke-width="0.50"/>
<path d="M135.2 24.2 a2.9 2.9 0 1 1 -0.6 3.6" fill="none" stroke="#555" stroke-width="0.60"/>
<path d="M134.2 22.9 l1.2 1.5 l1.7 -0.6" fill="none" stroke="#555" stroke-width="0.60"/>
<path d="M144.44 25.37 l2.52 0 l-1.26 1.47 z" fill="#707070"/>
<path d="M157.4 24.2 a2.9 2.9 0 1 0 0.6 3.6" fill="none" stroke="#d0d0d0" stroke-width="0.60"/>
<path d="M164.34 25.37 l2.52 0 l-1.26 1.47 z" fill="#d4d4d4"/>
<line x1="171.00" y1="21.50" x2="171.00" y2="31.00" stroke="#dcdcdc" stroke-width="0.50"/>
<rect x="176.60" y="22.40" width="6.80" height="6.90" fill="#fbfbfb" stroke="#333" stroke-width="0.70" rx="0.50"/>
<path d="M180 23.4 v4 m-1.3 -1.3 l1.3 1.5 l1.3 -1.5" fill="none" stroke="#333" stroke-width="0.70"/>
<rect x="189.40" y="22.40" width="6.80" height="6.90" fill="#fbfbfb" stroke="#333" stroke-width="0.70" rx="0.50"/>
<path d="M192.8 28.2 v-4 m-1.3 1.3 l1.3 -1.5 l1.3 1.5" fill="none" stroke="#333" stroke-width="0.70"/>
<text x="202.20" y="25.60" font-size="3.60" fill="#333" textLength="7.30" lengthAdjust="spacingAndGlyphs" font-weight="bold">PDF</text>
<rect x="202.40" y="26.40" width="3.20" height="3.00" fill="#555"/>
<rect x="246.40" y="21.90" width="7.60" height="8.90" fill="#ececec"/>
<line x1="246.40" y1="21.90" x2="246.40" y2="30.80" stroke="#d6d6d6" stroke-width="0.40"/>
<path d="M249.34 25.57 l2.52 0 l-1.26 1.47 z" fill="#707070"/>
<rect x="260.30" y="23.60" width="4.80" height="4.80" fill="#1e1e1e"/>
<path d="M259.2 24.4 v-1.9 h1.9 M264.3 22.5 h1.9 v1.9 M266.2 27.6 v1.9 h-1.9 M261.1 29.5 h-1.9 v-1.9" fill="none" stroke="#333" stroke-width="0.60"/>
<rect x="273.90" y="21.00" width="9.60" height="10.00" fill="#fcfcfc" stroke="#c8c8c8" stroke-width="0.50" rx="1.00"/>
<path d="M276 22.8 v6.4 h6.2 M276 22.8 h1.2 v5.2 h5 v1.2" fill="none" stroke="#444" stroke-width="0.55"/>
<path d="M279.4 24 h2.6 m-1.3 -1 v2" fill="none" stroke="#777" stroke-width="0.45"/>
<rect x="288.00" y="22.40" width="7.80" height="7.60" fill="#5c5c5c"/>
<line x1="288.00" y1="24.30" x2="295.80" y2="24.30" stroke="#c9c9c9" stroke-width="0.45"/>
<line x1="288.00" y1="26.20" x2="295.80" y2="26.20" stroke="#c9c9c9" stroke-width="0.45"/>
<line x1="288.00" y1="28.10" x2="295.80" y2="28.10" stroke="#c9c9c9" stroke-width="0.45"/>
<line x1="290.60" y1="22.40" x2="290.60" y2="30.00" stroke="#c9c9c9" stroke-width="0.45"/>
<line x1="293.20" y1="22.40" x2="293.20" y2="30.00" stroke="#c9c9c9" stroke-width="0.45"/>
<rect x="299.40" y="21.00" width="10.00" height="10.00" fill="#fcfcfc" stroke="#c8c8c8" stroke-width="0.50" rx="1.00"/>
<path d="M300.6 27.3 h7.6 M304.4 22.2 v7.8" fill="none" stroke="#888" stroke-width="0.45"/>
<path d="M305.6 23.6 h2.4 m-1.2 -0.9 v1.8" fill="none" stroke="#777" stroke-width="0.45"/>
<line x1="313.30" y1="21.50" x2="313.30" y2="31.00" stroke="#dcdcdc" stroke-width="0.50"/>
<rect x="317.40" y="22.60" width="6.60" height="6.80" fill="#fbfbfb" stroke="#555" stroke-width="0.55"/>
<path d="M320.2 26.4 l2.6 1.9 l-0.2 -2.6 z" fill="#333"/>
<path d="M320 25.2 l1.6 -1" fill="none" stroke="#333" stroke-width="0.60"/>
<circle cx="323.2" cy="23.2" r="1.0" fill="#e05a5a"/>
<path d="M365.04 25.47 l2.52 0 l-1.26 1.47 z" fill="#707070"/>
<line x1="372.40" y1="21.50" x2="372.40" y2="31.00" stroke="#dcdcdc" stroke-width="0.50"/>
<circle cx="381.1" cy="26.2" r="2.35" fill="none" stroke="#222" stroke-width="1.15"/>
<circle cx="381.1" cy="26.2" r="3.25" fill="none" stroke="#222" stroke-width="0.8" stroke-dasharray="1.0 1.55"/>
<path d="M384.2 29.2 l1.2 0 l0 -1.2 z" fill="#333"/>
<path d="M431.6 23.0 L436.9 26.3 L431.6 29.6 Z" fill="#1f8f3e"/>
<path d="M443.6 24.2 h4.2 M443.6 24.2 v5.4 h6.2 v-3.6" fill="none" stroke="#333" stroke-width="0.70"/>
<path d="M446.4 27.4 l3.6 -4.0 l0.9 0.8 l-3.6 4 z" fill="#333"/>
<path d="M456.6 29.6 V22.8 H458.4 V29.6 Z" fill="#fafafa" stroke="#222" stroke-width="0.60"/>
<path d="M458.9 29.6 L458.9 24.2 L463.4 29.6 Z" fill="#222"/>
<line x1="468.50" y1="21.50" x2="468.50" y2="31.00" stroke="#dcdcdc" stroke-width="0.50"/>
<path d="M473.2 23.6 h4 M473.2 23.6 v5.8 h6.2 v-4" fill="none" stroke="#333" stroke-width="0.70"/>
<circle cx="478.4" cy="23.8" r="1.5" fill="#d9242b"/>
<path d="M475 26 h2.6 v2 h-2.6 z" fill="#999"/>
<path d="M485.60 23.6 h4 M485.60 23.6 v5.8 h6.2 v-4" fill="none" stroke="#d2d2d2" stroke-width="0.70"/>
<path d="M489.80 22.8 h2.4 v2.4 h-2.4z" fill="#dadada"/>
<path d="M498.40 23.6 h4 M498.40 23.6 v5.8 h6.2 v-4" fill="none" stroke="#d2d2d2" stroke-width="0.70"/>
<path d="M502.60 22.8 h2.4 v2.4 h-2.4z" fill="#dadada"/>
<line x1="510.60" y1="21.50" x2="510.60" y2="31.00" stroke="#dcdcdc" stroke-width="0.50"/>
<rect x="515.40" y="22.80" width="6.40" height="6.40" fill="#f8f8f8" stroke="#2a2a2a" stroke-width="0.70"/>
<rect x="515.40" y="22.80" width="6.40" height="1.70" fill="#2a2a2a"/>
<line x1="515.40" y1="27.80" x2="521.80" y2="27.80" stroke="#444" stroke-width="0.50"/>
<rect x="418.60" y="24.80" width="1.80" height="1.80" fill="#dcdcdc"/>
<ellipse cx="3.60" cy="38.40" rx="1.5" ry="1.05" fill="none" stroke="#111" stroke-width="0.6"/>
<ellipse cx="7.60" cy="38.40" rx="1.5" ry="1.05" fill="none" stroke="#111" stroke-width="0.6"/>
<ellipse cx="11.60" cy="38.40" rx="1.5" ry="1.05" fill="none" stroke="#111" stroke-width="0.6"/>
<ellipse cx="3.60" cy="42.40" rx="1.5" ry="1.05" fill="none" stroke="#111" stroke-width="0.6"/>
<rect x="6.40" y="41.20" width="2.40" height="2.40" fill="#111"/>
<ellipse cx="11.60" cy="42.40" rx="1.5" ry="1.05" fill="none" stroke="#111" stroke-width="0.6"/>
<ellipse cx="3.60" cy="46.40" rx="1.5" ry="1.05" fill="none" stroke="#111" stroke-width="0.6"/>
<ellipse cx="7.60" cy="46.40" rx="1.5" ry="1.05" fill="none" stroke="#111" stroke-width="0.6"/>
<ellipse cx="11.60" cy="46.40" rx="1.5" ry="1.05" fill="none" stroke="#111" stroke-width="0.6"/>
<path d="M5.1 38.4 h1 M9.1 38.4 h1 M5.1 46.4 h1 M9.1 46.4 h1 M3.6 39.5 v1.8 M3.6 43.5 v1.8 M11.6 39.5 v1.8 M11.6 43.5 v1.8" fill="none" stroke="#111" stroke-width="0.60"/>
<path d="M68.4 39.4 h5.2 M68.4 38.4 v2 M73.6 38.4 v2" fill="none" stroke="#222" stroke-width="0.80"/>
<path d="M71.2 43.6 v5.4" fill="none" stroke="#333" stroke-width="1.60" stroke-dasharray="1 0.5"/>
<rect x="145.00" y="42.40" width="4.60" height="2.40" fill="#111" rx="1.00"/>
<path d="M146.4 42.4 v-2.2 h-1.2" fill="none" stroke="#111" stroke-width="0.70"/>
<line x1="154.00" y1="35.00" x2="154.00" y2="50.00" stroke="#dcdcdc" stroke-width="0.50"/>
<circle cx="162.2" cy="42.4" r="3.0" fill="none" stroke="#333" stroke-width="0.55"/>
<path d="M158.4 42.0 l0.9 1.6 l1.2 -1.4" fill="none" stroke="#333" stroke-width="0.50"/>
<ellipse cx="195.5" cy="41.0" rx="2.0" ry="1.5" fill="none" stroke="#555" stroke-width="0.55"/>
<line x1="202.30" y1="35.00" x2="202.30" y2="50.00" stroke="#dcdcdc" stroke-width="0.50"/>
<path d="M207.8 40.4 h2.4 v3.6 h-2.4 z" fill="#e8f2f8" stroke="#6a8fa8" stroke-width="0.50"/>
<rect x="211.40" y="40.20" width="2.60" height="4.00" fill="#2d6f96"/>
<line x1="210.80" y1="39.20" x2="210.80" y2="45.40" stroke="#555" stroke-width="0.40"/>
<path d="M222.6 39.4 h3.6 v1.2 h-2.4 v1.2 h2.4" fill="none" stroke="#2a6f7f" stroke-width="0.70"/>
<rect x="222.40" y="43.00" width="4.00" height="2.60" fill="#1e6374"/>
<line x1="220.60" y1="42.40" x2="227.60" y2="42.40" stroke="#2a6f7f" stroke-width="0.50"/>
<line x1="233.20" y1="35.00" x2="233.20" y2="50.00" stroke="#dcdcdc" stroke-width="0.50"/>
<path d="M241 39.2 l1.4 2.8 l-0.6 2.4 h-1.6 l-0.6 -2.4 z" fill="#f4f4f4" stroke="#444" stroke-width="0.55"/>
<path d="M239.9 45.0 h2.2 v0.9 h-2.2z" fill="#555"/>
<line x1="241.00" y1="40.60" x2="241.00" y2="43.20" stroke="#444" stroke-width="0.40"/>
<rect x="273.30" y="37.70" width="7.80" height="9.50" fill="#ececec" stroke="#d6d6d6" stroke-width="0.40"/>
<path d="M276.14 42.07 l2.52 0 l-1.26 1.47 z" fill="#707070"/>
<line x1="284.40" y1="42.30" x2="319.60" y2="42.30" stroke="#333" stroke-width="0.70"/>
<rect x="319.60" y="37.70" width="8.20" height="9.50" fill="#ececec" stroke="#d6d6d6" stroke-width="0.40"/>
<path d="M322.54 42.07 l2.52 0 l-1.26 1.47 z" fill="#707070"/>
<line x1="330.70" y1="35.00" x2="330.70" y2="50.00" stroke="#dcdcdc" stroke-width="0.50"/>
<rect x="347.60" y="37.70" width="7.70" height="9.50" fill="#ececec" stroke="#d6d6d6" stroke-width="0.40"/>
<line x1="342.40" y1="42.20" x2="347.60" y2="42.20" stroke="#333" stroke-width="0.80"/>
<path d="M350.34 41.97 l2.52 0 l-1.26 1.47 z" fill="#707070"/>
<rect x="372.60" y="37.70" width="5.60" height="9.50" fill="#ececec" stroke="#d6d6d6" stroke-width="0.40"/>
<line x1="358.80" y1="42.20" x2="364.20" y2="42.20" stroke="#333" stroke-width="0.80"/>
<path d="M374.34 41.97 l2.52 0 l-1.26 1.47 z" fill="#707070"/>
<line x1="383.50" y1="35.00" x2="383.50" y2="50.00" stroke="#dcdcdc" stroke-width="0.50"/>
<path d="M387.2 41.8 l3.3 -2.2 l3.3 2.2 M387.2 45.6 q1.6 -2.4 3.3 -1 t3.3 -1" fill="none" stroke="#333" stroke-width="0.55"/>
<rect x="410.80" y="37.70" width="6.80" height="9.50" fill="#ececec" stroke="#d6d6d6" stroke-width="0.40"/>
<path d="M411.9 42.5 h4.8 M414.3 39.8 v5.4" fill="none" stroke="#222" stroke-width="0.80"/>
<line x1="421.20" y1="35.00" x2="421.20" y2="50.00" stroke="#dcdcdc" stroke-width="0.50"/>
<rect x="424.60" y="37.30" width="11.40" height="10.20" fill="#fdfdfd" stroke="#c4c4c4" stroke-width="0.50" rx="0.80"/>
<path d="M427.2 39.6 h2.6 a2.9 2.9 0 0 1 0 5.8 h-2.6 z" fill="none" stroke="#333" stroke-width="0.65"/>
<rect x="443.00" y="39.60" width="5.60" height="5.60" fill="none" stroke="#333" stroke-width="0.70"/>
<path d="M445.8 42.6 l4.2 -4 M448.4 38.4 h1.9 v1.9" fill="none" stroke="#333" stroke-width="0.70"/>
<rect x="442.20" y="44.40" width="1.60" height="1.60" fill="#333"/>
<line x1="454.70" y1="35.00" x2="454.70" y2="50.00" stroke="#dcdcdc" stroke-width="0.50"/>
<rect x="459.40" y="39.40" width="6.80" height="2.40" fill="#4f6f8a"/>
<rect x="459.40" y="42.80" width="6.80" height="2.40" fill="#6d8499"/>
<path d="M465.6 45.6 l1.8 0 l-0.9 1.2z" fill="#4f6f8a"/>
<line x1="471.10" y1="35.00" x2="471.10" y2="50.00" stroke="#dcdcdc" stroke-width="0.50"/>
<path d="M475.4 42.4 h8 M479.4 39.6 v5.6 M476.6 40.4 l5.6 4 M482.2 40.4 l-5.6 4" fill="none" stroke="#dcdcdc" stroke-width="0.50"/>
<line x1="487.30" y1="35.00" x2="487.30" y2="50.00" stroke="#dcdcdc" stroke-width="0.50"/>
<path d="M493.4 39.2 q2.4 3.2 0 6.4 M498.0 39.2 q-2.4 3.2 0 6.4" fill="none" stroke="#222" stroke-width="0.80"/>
<path d="M491.8 42.4 h1.8 M497.6 42.4 h1.8" fill="none" stroke="#222" stroke-width="0.60"/>
<line x1="503.50" y1="35.00" x2="503.50" y2="50.00" stroke="#dcdcdc" stroke-width="0.50"/>
<path d="M511.6 42.4 h5.2 M514.2 39.8 v5.2" fill="none" stroke="#b0b0b0" stroke-width="0.60"/>
<path d="M15.0 56.6 L18.3 53.3 L21.6 56.6 H20.6 V59.4 H19.0 V57.4 H17.6 V59.4 H16.0 V56.6 Z" fill="#222"/>
<rect x="2.00" y="54.90" width="10.30" height="9.20" fill="#ffffff" stroke="#c9c9c9" stroke-width="0.50"/>
<path d="M5.8 56.2 L5.8 62.2 L7.2 60.9 L8.2 63.0 L9.0 62.6 L8.0 60.6 L9.8 60.4 Z" fill="#111"/>
<path d="M11.0 63.6 l1.0 0 l0 -1.0 z" fill="#444"/>
<path d="M5.0 69.2 L3.9 72.6 L4.9 72.2 L5.9 75.6" fill="none" stroke="#333" stroke-width="0.60"/>
<path d="M5.0 69.2 L6.3 72.0" fill="none" stroke="#333" stroke-width="0.60"/>
<line x1="8.00" y1="73.20" x2="11.30" y2="76.20" stroke="#1a1a1a" stroke-width="1.40"/>
<path d="M11.4 78.6 l1.0 0 l0 -1.0 z" fill="#444"/>
<path d="M4.0 92.0 V87.6 L7.0 85.0 V92.0" fill="#3f8f80" stroke="#2c5f58" stroke-width="0.50"/>
<rect x="4.80" y="88.60" width="1.60" height="3.20" fill="#e8f4f0"/>
<rect x="7.80" y="85.00" width="2.60" height="2.40" fill="#d9293a" rx="0.60"/>
<path d="M11.0 93.2 l1.0 0 l0 -1.0 z" fill="#444"/>
<circle cx="6.3" cy="100.4" r="2.8" fill="none" stroke="#333" stroke-width="0.6"/>
<line x1="8.40" y1="102.60" x2="11.60" y2="105.80" stroke="#333" stroke-width="0.90"/>
<path d="M4.0 115.4 h2.4 M5.2 114.2 v2.4" fill="none" stroke="#333" stroke-width="0.50"/>
<path d="M5.0 121.0 q0.8 -2.6 1.8 -0.8 t1.8 -0.6 t1.8 0.2" fill="none" stroke="#222" stroke-width="0.80"/>
<path d="M11.0 122.6 l1.0 0 l0 -1.0 z" fill="#444"/>
<path d="M3.6 129.6 q1.4 -2.6 3.0 -1.2 q1.2 1.4 0.2 3.2 q-0.6 1.8 1.2 2.0 q2.0 -0.2 2.2 -2.6" fill="none" stroke="#222" stroke-width="0.85"/>
<path d="M11.0 135.2 l1.0 0 l0 -1.0 z" fill="#444"/>
<rect x="3.60" y="140.60" width="7.00" height="6.20" fill="none" stroke="#333" stroke-width="0.60"/>
<path d="M11.0 148.2 l1.0 0 l0 -1.0 z" fill="#444"/>
<ellipse cx="7.0" cy="156.3" rx="3.6" ry="3.4" fill="none" stroke="#333" stroke-width="0.6"/>
<path d="M10.4 160.8 l1.0 0 l0 -1.0 z" fill="#444"/>
<path d="M3.4 169.0 L5.2 165.4 H8.6 L10.4 169.0 L8.6 172.6 H5.2 Z" fill="none" stroke="#333" stroke-width="0.60"/>
<path d="M10.4 174.0 l1.0 0 l0 -1.0 z" fill="#444"/>
<text x="3.40" y="188.80" font-size="9.40" fill="#222" textLength="7.00" lengthAdjust="spacingAndGlyphs">A</text>
<path d="M10.6 190.2 l1.0 0 l0 -1.0 z" fill="#444"/>
<line x1="4.20" y1="204.20" x2="9.40" y2="198.60" stroke="#333" stroke-width="0.70"/>
<path d="M8.8 198.0 l1.2 1.2 M3.6 203.6 l1.2 1.2" fill="none" stroke="#333" stroke-width="0.50"/>
<path d="M10.6 206.6 l1.0 0 l0 -1.0 z" fill="#444"/>
<line x1="4.20" y1="212.20" x2="10.80" y2="218.40" stroke="#3a2f2a" stroke-width="0.90"/>
<path d="M3.4 211.4 l2.2 0.2 l-0.4 1.8 z M11.6 219.2 l-2.2 -0.2 l0.4 -1.8 z" fill="#333"/>
<circle cx="4.6" cy="212.6" r="1.1" fill="#444"/>
<circle cx="10.2" cy="217.8" r="1.1" fill="#444"/>
<rect x="3.40" y="227.40" width="7.40" height="7.00" fill="#8c8c8c"/>
<rect x="5.80" y="229.60" width="2.60" height="2.60" fill="#ffffff"/>
<path d="M10.8 236.0 l1.2 0 l0 -1.2 z" fill="#444"/>
<rect x="3.40" y="240.20" width="7.50" height="7.10" fill="#3a3a3a"/>
<rect x="3.90" y="240.70" width="1.20" height="1.15" fill="#d8d8d8"/>
<rect x="7.30" y="240.70" width="1.20" height="1.15" fill="#d8d8d8"/>
<rect x="5.60" y="242.30" width="1.20" height="1.15" fill="#d8d8d8"/>
<rect x="9.00" y="242.30" width="1.20" height="1.15" fill="#d8d8d8"/>
<rect x="3.90" y="243.90" width="1.20" height="1.15" fill="#d8d8d8"/>
<rect x="7.30" y="243.90" width="1.20" height="1.15" fill="#d8d8d8"/>
<rect x="5.60" y="245.50" width="1.20" height="1.15" fill="#d8d8d8"/>
<rect x="9.00" y="245.50" width="1.20" height="1.15" fill="#d8d8d8"/>
<line x1="3.80" y1="263.60" x2="8.00" y2="259.20" stroke="#444" stroke-width="0.90"/>
<path d="M7.4 258.6 l1.8 -1.8 l1.2 1.2 l-1.8 1.8 z" fill="#222"/>
<path d="M10.6 265.6 l1.0 0 l0 -1.0 z" fill="#444"/>
<path d="M4.2 275.6 q2.8 -2.6 5.8 0 v1.6 h-5.8z" fill="#c58a5a" stroke="#4a3a30" stroke-width="0.50"/>
<circle cx="7.0" cy="272.0" r="1.5" fill="#f0f0f0" stroke="#333" stroke-width="0.5"/>
<path d="M3.6 277.4 h7.4" fill="none" stroke="#333" stroke-width="0.70"/>
<path d="M4.8 291.5 h5.0 M7.3 289.0 v5.0" fill="none" stroke="#a9a9a9" stroke-width="0.55"/>
<path d="M825.6 56.0 l1.2 1.0 l-1.2 1.0 M827.4 56.0 l1.2 1.0 l-1.2 1.0" fill="none" stroke="#b9b9b9" stroke-width="0.45"/>
<path d="M834.6 56.0 l1.9 1.9 m0 -1.9 l-1.9 1.9" fill="none" stroke="#c4c4c4" stroke-width="0.45"/>
<rect x="687.00" y="63.20" width="144.60" height="9.60" fill="#e9e9e9"/>
<path d="M692 65.4 l1.5 2.9 l-0.7 2.3 h-1.6 l-0.7 -2.3 z" fill="#f6f6f6" stroke="#222" stroke-width="0.65"/>
<line x1="692.00" y1="66.80" x2="692.00" y2="69.40" stroke="#444" stroke-width="0.40"/>
<path d="M690.9 71.0 h2.2 v0.8 h-2.2z" fill="#555"/>
<path d="M702.0 68.6 l3.4 -3.2 l3.4 3.2 l-3.4 2.8 z" fill="#fbfbfb" stroke="#333" stroke-width="0.55"/>
<path d="M706.2 70.6 l2.6 -2.0 q0.8 1.8 0.4 3.2 z" fill="#d8824a"/>
<path d="M704.2 65.2 l2 1.6" fill="none" stroke="#333" stroke-width="0.50"/>
<rect x="714.40" y="64.40" width="7.60" height="7.40" fill="#333333"/>
<rect x="714.90" y="64.90" width="1.25" height="1.20" fill="#d0d0d0"/>
<rect x="718.30" y="64.90" width="1.25" height="1.20" fill="#d0d0d0"/>
<rect x="716.60" y="66.55" width="1.25" height="1.20" fill="#d0d0d0"/>
<rect x="720.00" y="66.55" width="1.25" height="1.20" fill="#d0d0d0"/>
<rect x="714.90" y="68.20" width="1.25" height="1.20" fill="#d0d0d0"/>
<rect x="718.30" y="68.20" width="1.25" height="1.20" fill="#d0d0d0"/>
<rect x="716.60" y="69.85" width="1.25" height="1.20" fill="#d0d0d0"/>
<rect x="720.00" y="69.85" width="1.25" height="1.20" fill="#d0d0d0"/>
<text x="727.3" y="70.8" font-size="7.0" fill="#111" font-style="italic" font-weight="bold" font-family="'Liberation Serif', serif" textLength="7.2" lengthAdjust="spacingAndGlyphs">fx</text>
<rect x="738.60" y="63.20" width="9.70" height="9.60" fill="#ffffff"/>
<path d="M740.2 65.6 q1.6 -1.4 2.4 0.8 l1.4 4.0 q0.8 2.0 2.6 0.4" fill="none" stroke="#222" stroke-width="0.65"/>
<rect x="752.80" y="64.40" width="7.20" height="7.20" fill="#f4f4f4" stroke="#222" stroke-width="0.60"/>
<path d="M752.8 71.6 v-2.6 l2 -1.6 l1.6 1.2 l1.4 -0.8 l2.2 1.4 v2.4 z" fill="#222"/>
<rect x="755.60" y="65.40" width="1.40" height="1.60" fill="#222"/>
<rect x="807.40" y="64.00" width="9.30" height="8.50" fill="#ffffff" stroke="#d0d0d0" stroke-width="0.50" rx="1.00"/>
<path d="M809.0 70.8 v-3.8 a1 1 0 0 1 1 -1 h4.1 a1 1 0 0 1 1 1 v3.8 z" fill="#fff" stroke="#222" stroke-width="0.60"/>
<path d="M809.4 66.2 h5.4" fill="none" stroke="#222" stroke-width="1.00"/>
<rect x="820.90" y="64.00" width="9.60" height="8.50" fill="#ffffff" stroke="#d0d0d0" stroke-width="0.50" rx="1.00"/>
<path d="M825.6 65.8 h-3 v5.2 h5.4 v-3" fill="none" stroke="#333" stroke-width="0.65"/>
<path d="M826.4 65.6 h2.2 m-1.1 -1 v2" fill="none" stroke="#777" stroke-width="0.50"/>
<path d="M833.4 66.2 a1.5 1.5 0 1 1 1.6 1.4 l0.1 2.0" fill="none" stroke="#2a2f6a" stroke-width="0.80"/>
<path d="M836.2 69.2 h3.2 M836.2 70.6 h3.2" fill="none" stroke="#2a5f9a" stroke-width="0.60"/>
<path d="M844.6 58.6 l1.2 -1.4 l1.2 1.4 z" fill="#555"/>
<line x1="843.40" y1="70.40" x2="847.60" y2="66.20" stroke="#bdbdbd" stroke-width="0.70"/>
<path d="M843.4 76.4 l2.4 -2.2 l2.4 2.2" fill="none" stroke="#d6d6d6" stroke-width="0.60"/>
<path d="M843.6 428.2 l2.0 1.8 l2.0 -1.8" fill="none" stroke="#aaa" stroke-width="0.50"/>
<path d="M844.0 435.0 l1.4 1.2 l-1.4 1.2 M846.0 435.0 l1.4 1.2 l-1.4 1.2" fill="none" stroke="#c6c6c6" stroke-width="0.45"/>
<path d="M833.2 108.4 h4.4 v1.6 h-4.4z M834.0 111.0 h3.6 v2.2 h-3.6z" fill="none" stroke="#555" stroke-width="0.50"/>
<path d="M837.0 107.6 h1.8" fill="none" stroke="#555" stroke-width="0.50"/>
<circle cx="835.4" cy="197.4" r="2.0" fill="none" stroke="#444" stroke-width="0.55"/>
<line x1="836.80" y1="196.00" x2="838.60" y2="194.20" stroke="#444" stroke-width="0.60"/>
<path d="M833.6 231.6 h3.6 l1.0 1.2 v4.0 q-2.4 1.2 -4.6 0 z" fill="#f7f7f7" stroke="#555" stroke-width="0.50"/>
<path d="M833.6 268.6 l1.2 -1.2 M838.4 268.6 l-1.2 -1.2 M835.2 266.0 h1.6" fill="none" stroke="#444" stroke-width="0.60"/>
<circle cx="835.4" cy="337.0" r="1.7" fill="none" stroke="#444" stroke-width="0.55"/>
<path d="M837.0 333.8 h2 m-1 -1 v2" fill="none" stroke="#444" stroke-width="0.50"/>
<line x1="24.81" y1="67.60" x2="24.81" y2="69.40" stroke="#7a7a7a" stroke-width="0.40"/>
<line x1="27.26" y1="68.50" x2="27.26" y2="69.40" stroke="#b5b5b5" stroke-width="0.35"/>
<line x1="29.72" y1="68.50" x2="29.72" y2="69.40" stroke="#b5b5b5" stroke-width="0.35"/>
<line x1="32.17" y1="68.50" x2="32.17" y2="69.40" stroke="#b5b5b5" stroke-width="0.35"/>
<line x1="34.63" y1="68.50" x2="34.63" y2="69.40" stroke="#b5b5b5" stroke-width="0.35"/>
<line x1="37.08" y1="66.20" x2="37.08" y2="69.40" stroke="#7a7a7a" stroke-width="0.45"/>
<text x="37.88" y="65.90" font-size="3.70" fill="#5a5a5a" text-anchor="middle">160</text>
<line x1="39.53" y1="68.50" x2="39.53" y2="69.40" stroke="#b5b5b5" stroke-width="0.35"/>
<line x1="41.99" y1="68.50" x2="41.99" y2="69.40" stroke="#b5b5b5" stroke-width="0.35"/>
<line x1="44.44" y1="68.50" x2="44.44" y2="69.40" stroke="#b5b5b5" stroke-width="0.35"/>
<line x1="46.90" y1="68.50" x2="46.90" y2="69.40" stroke="#b5b5b5" stroke-width="0.35"/>
<line x1="49.35" y1="67.60" x2="49.35" y2="69.40" stroke="#7a7a7a" stroke-width="0.40"/>
<line x1="51.80" y1="68.50" x2="51.80" y2="69.40" stroke="#b5b5b5" stroke-width="0.35"/>
<line x1="54.26" y1="68.50" x2="54.26" y2="69.40" stroke="#b5b5b5" stroke-width="0.35"/>
<line x1="56.71" y1="68.50" x2="56.71" y2="69.40" stroke="#b5b5b5" stroke-width="0.35"/>
<line x1="59.17" y1="68.50" x2="59.17" y2="69.40" stroke="#b5b5b5" stroke-width="0.35"/>
<line x1="61.62" y1="66.20" x2="61.62" y2="69.40" stroke="#7a7a7a" stroke-width="0.45"/>
<text x="62.42" y="65.90" font-size="3.70" fill="#5a5a5a" text-anchor="middle">140</text>
<line x1="64.07" y1="68.50" x2="64.07" y2="69.40" stroke="#b5b5b5" stroke-width="0.35"/>
<line x1="66.53" y1="68.50" x2="66.53" y2="69.40" stroke="#b5b5b5" stroke-width="0.35"/>
<line x1="68.98" y1="68.50" x2="68.98" y2="69.40" stroke="#b5b5b5" stroke-width="0.35"/>
<line x1="71.44" y1="68.50" x2="71.44" y2="69.40" stroke="#b5b5b5" stroke-width="0.35"/>
<line x1="73.89" y1="67.60" x2="73.89" y2="69.40" stroke="#7a7a7a" stroke-width="0.40"/>
<line x1="76.34" y1="68.50" x2="76.34" y2="69.40" stroke="#b5b5b5" stroke-width="0.35"/>
<line x1="78.80" y1="68.50" x2="78.80" y2="69.40" stroke="#b5b5b5" stroke-width="0.35"/>
<line x1="81.25" y1="68.50" x2="81.25" y2="69.40" stroke="#b5b5b5" stroke-width="0.35"/>
<line x1="83.71" y1="68.50" x2="83.71" y2="69.40" stroke="#b5b5b5" stroke-width="0.35"/>
<line x1="86.16" y1="66.20" x2="86.16" y2="69.40" stroke="#7a7a7a" stroke-width="0.45"/>
<text x="86.96" y="65.90" font-size="3.70" fill="#5a5a5a" text-anchor="middle">120</text>
<line x1="88.61" y1="68.50" x2="88.61" y2="69.40" stroke="#b5b5b5" stroke-width="0.35"/>
<line x1="91.07" y1="68.50" x2="91.07" y2="69.40" stroke="#b5b5b5" stroke-width="0.35"/>
<line x1="93.52" y1="68.50" x2="93.52" y2="69.40" stroke="#b5b5b5" stroke-width="0.35"/>
<line x1="95.98" y1="68.50" x2="95.98" y2="69.40" stroke="#b5b5b5" stroke-width="0.35"/>
<line x1="98.43" y1="67.60" x2="98.43" y2="69.40" stroke="#7a7a7a" stroke-width="0.40"/>
<line x1="100.88" y1="68.50" x2="100.88" y2="69.40" stroke="#b5b5b5" stroke-width="0.35"/>
<line x1="103.34" y1="68.50" x2="103.34" y2="69.40" stroke="#b5b5b5" stroke-width="0.35"/>
<line x1="105.79" y1="68.50" x2="105.79" y2="69.40" stroke="#b5b5b5" stroke-width="0.35"/>
<line x1="108.25" y1="68.50" x2="108.25" y2="69.40" stroke="#b5b5b5" stroke-width="0.35"/>
<line x1="110.70" y1="66.20" x2="110.70" y2="69.40" stroke="#7a7a7a" stroke-width="0.45"/>
<text x="111.50" y="65.90" font-size="3.70" fill="#5a5a5a" text-anchor="middle">100</text>
<line x1="113.15" y1="68.50" x2="113.15" y2="69.40" stroke="#b5b5b5" stroke-width="0.35"/>
<line x1="115.61" y1="68.50" x2="115.61" y2="69.40" stroke="#b5b5b5" stroke-width="0.35"/>
<line x1="118.06" y1="68.50" x2="118.06" y2="69.40" stroke="#b5b5b5" stroke-width="0.35"/>
<line x1="120.52" y1="68.50" x2="120.52" y2="69.40" stroke="#b5b5b5" stroke-width="0.35"/>
<line x1="122.97" y1="67.60" x2="122.97" y2="69.40" stroke="#7a7a7a" stroke-width="0.40"/>
<line x1="125.42" y1="68.50" x2="125.42" y2="69.40" stroke="#b5b5b5" stroke-width="0.35"/>
<line x1="127.88" y1="68.50" x2="127.88" y2="69.40" stroke="#b5b5b5" stroke-width="0.35"/>
<line x1="130.33" y1="68.50" x2="130.33" y2="69.40" stroke="#b5b5b5" stroke-width="0.35"/>
<line x1="132.79" y1="68.50" x2="132.79" y2="69.40" stroke="#b5b5b5" stroke-width="0.35"/>
<line x1="135.24" y1="66.20" x2="135.24" y2="69.40" stroke="#7a7a7a" stroke-width="0.45"/>
<text x="136.04" y="65.90" font-size="3.70" fill="#5a5a5a" text-anchor="middle">80</text>
<line x1="137.69" y1="68.50" x2="137.69" y2="69.40" stroke="#b5b5b5" stroke-width="0.35"/>
<line x1="140.15" y1="68.50" x2="140.15" y2="69.40" stroke="#b5b5b5" stroke-width="0.35"/>
<line x1="142.60" y1="68.50" x2="142.60" y2="69.40" stroke="#b5b5b5" stroke-width="0.35"/>
<line x1="145.06" y1="68.50" x2="145.06" y2="69.40" stroke="#b5b5b5" stroke-width="0.35"/>
<line x1="147.51" y1="67.60" x2="147.51" y2="69.40" stroke="#7a7a7a" stroke-width="0.40"/>
<line x1="149.96" y1="68.50" x2="149.96" y2="69.40" stroke="#b5b5b5" stroke-width="0.35"/>
<line x1="152.42" y1="68.50" x2="152.42" y2="69.40" stroke="#b5b5b5" stroke-width="0.35"/>
<line x1="154.87" y1="68.50" x2="154.87" y2="69.40" stroke="#b5b5b5" stroke-width="0.35"/>
<line x1="157.33" y1="68.50" x2="157.33" y2="69.40" stroke="#b5b5b5" stroke-width="0.35"/>
<line x1="159.78" y1="66.20" x2="159.78" y2="69.40" stroke="#7a7a7a" stroke-width="0.45"/>
<text x="160.58" y="65.90" font-size="3.70" fill="#5a5a5a" text-anchor="middle">60</text>
<line x1="162.23" y1="68.50" x2="162.23" y2="69.40" stroke="#b5b5b5" stroke-width="0.35"/>
<line x1="164.69" y1="68.50" x2="164.69" y2="69.40" stroke="#b5b5b5" stroke-width="0.35"/>
<line x1="167.14" y1="68.50" x2="167.14" y2="69.40" stroke="#b5b5b5" stroke-width="0.35"/>
<line x1="169.60" y1="68.50" x2="169.60" y2="69.40" stroke="#b5b5b5" stroke-width="0.35"/>
<line x1="172.05" y1="67.60" x2="172.05" y2="69.40" stroke="#7a7a7a" stroke-width="0.40"/>
<line x1="174.50" y1="68.50" x2="174.50" y2="69.40" stroke="#b5b5b5" stroke-width="0.35"/>
<line x1="176.96" y1="68.50" x2="176.96" y2="69.40" stroke="#b5b5b5" stroke-width="0.35"/>
<line x1="179.41" y1="68.50" x2="179.41" y2="69.40" stroke="#b5b5b5" stroke-width="0.35"/>
<line x1="181.87" y1="68.50" x2="181.87" y2="69.40" stroke="#b5b5b5" stroke-width="0.35"/>
<line x1="184.32" y1="66.20" x2="184.32" y2="69.40" stroke="#7a7a7a" stroke-width="0.45"/>
<text x="185.12" y="65.90" font-size="3.70" fill="#5a5a5a" text-anchor="middle">40</text>
<line x1="186.77" y1="68.50" x2="186.77" y2="69.40" stroke="#b5b5b5" stroke-width="0.35"/>
<line x1="189.23" y1="68.50" x2="189.23" y2="69.40" stroke="#b5b5b5" stroke-width="0.35"/>
<line x1="191.68" y1="68.50" x2="191.68" y2="69.40" stroke="#b5b5b5" stroke-width="0.35"/>
<line x1="194.14" y1="68.50" x2="194.14" y2="69.40" stroke="#b5b5b5" stroke-width="0.35"/>
<line x1="196.59" y1="67.60" x2="196.59" y2="69.40" stroke="#7a7a7a" stroke-width="0.40"/>
<line x1="199.04" y1="68.50" x2="199.04" y2="69.40" stroke="#b5b5b5" stroke-width="0.35"/>
<line x1="201.50" y1="68.50" x2="201.50" y2="69.40" stroke="#b5b5b5" stroke-width="0.35"/>
<line x1="203.95" y1="68.50" x2="203.95" y2="69.40" stroke="#b5b5b5" stroke-width="0.35"/>
<line x1="206.41" y1="68.50" x2="206.41" y2="69.40" stroke="#b5b5b5" stroke-width="0.35"/>
<line x1="208.86" y1="66.20" x2="208.86" y2="69.40" stroke="#7a7a7a" stroke-width="0.45"/>
<text x="209.66" y="65.90" font-size="3.70" fill="#5a5a5a" text-anchor="middle">20</text>
<line x1="211.31" y1="68.50" x2="211.31" y2="69.40" stroke="#b5b5b5" stroke-width="0.35"/>
<line x1="213.77" y1="68.50" x2="213.77" y2="69.40" stroke="#b5b5b5" stroke-width="0.35"/>
<line x1="216.22" y1="68.50" x2="216.22" y2="69.40" stroke="#b5b5b5" stroke-width="0.35"/>
<line x1="218.68" y1="68.50" x2="218.68" y2="69.40" stroke="#b5b5b5" stroke-width="0.35"/>
<line x1="221.13" y1="67.60" x2="221.13" y2="69.40" stroke="#7a7a7a" stroke-width="0.40"/>
<line x1="223.58" y1="68.50" x2="223.58" y2="69.40" stroke="#b5b5b5" stroke-width="0.35"/>
<line x1="226.04" y1="68.50" x2="226.04" y2="69.40" stroke="#b5b5b5" stroke-width="0.35"/>
<line x1="228.49" y1="68.50" x2="228.49" y2="69.40" stroke="#b5b5b5" stroke-width="0.35"/>
<line x1="230.95" y1="68.50" x2="230.95" y2="69.40" stroke="#b5b5b5" stroke-width="0.35"/>
<line x1="233.40" y1="66.20" x2="233.40" y2="69.40" stroke="#7a7a7a" stroke-width="0.45"/>
<text x="234.20" y="65.90" font-size="3.70" fill="#5a5a5a" text-anchor="middle">0</text>
<line x1="235.85" y1="68.50" x2="235.85" y2="69.40" stroke="#b5b5b5" stroke-width="0.35"/>
<line x1="238.31" y1="68.50" x2="238.31" y2="69.40" stroke="#b5b5b5" stroke-width="0.35"/>
<line x1="240.76" y1="68.50" x2="240.76" y2="69.40" stroke="#b5b5b5" stroke-width="0.35"/>
<line x1="243.22" y1="68.50" x2="243.22" y2="69.40" stroke="#b5b5b5" stroke-width="0.35"/>
<line x1="245.67" y1="67.60" x2="245.67" y2="69.40" stroke="#7a7a7a" stroke-width="0.40"/>
<line x1="248.12" y1="68.50" x2="248.12" y2="69.40" stroke="#b5b5b5" stroke-width="0.35"/>
<line x1="250.58" y1="68.50" x2="250.58" y2="69.40" stroke="#b5b5b5" stroke-width="0.35"/>
<line x1="253.03" y1="68.50" x2="253.03" y2="69.40" stroke="#b5b5b5" stroke-width="0.35"/>
<line x1="255.49" y1="68.50" x2="255.49" y2="69.40" stroke="#b5b5b5" stroke-width="0.35"/>
<line x1="257.94" y1="66.20" x2="257.94" y2="69.40" stroke="#7a7a7a" stroke-width="0.45"/>
<text x="258.74" y="65.90" font-size="3.70" fill="#5a5a5a" text-anchor="middle">20</text>
<line x1="260.39" y1="68.50" x2="260.39" y2="69.40" stroke="#b5b5b5" stroke-width="0.35"/>
<line x1="262.85" y1="68.50" x2="262.85" y2="69.40" stroke="#b5b5b5" stroke-width="0.35"/>
<line x1="265.30" y1="68.50" x2="265.30" y2="69.40" stroke="#b5b5b5" stroke-width="0.35"/>
<line x1="267.76" y1="68.50" x2="267.76" y2="69.40" stroke="#b5b5b5" stroke-width="0.35"/>
<line x1="270.21" y1="67.60" x2="270.21" y2="69.40" stroke="#7a7a7a" stroke-width="0.40"/>
<line x1="272.66" y1="68.50" x2="272.66" y2="69.40" stroke="#b5b5b5" stroke-width="0.35"/>
<line x1="275.12" y1="68.50" x2="275.12" y2="69.40" stroke="#b5b5b5" stroke-width="0.35"/>
<line x1="277.57" y1="68.50" x2="277.57" y2="69.40" stroke="#b5b5b5" stroke-width="0.35"/>
<line x1="280.03" y1="68.50" x2="280.03" y2="69.40" stroke="#b5b5b5" stroke-width="0.35"/>
<line x1="282.48" y1="66.20" x2="282.48" y2="69.40" stroke="#7a7a7a" stroke-width="0.45"/>
<text x="283.28" y="65.90" font-size="3.70" fill="#5a5a5a" text-anchor="middle">40</text>
<line x1="284.93" y1="68.50" x2="284.93" y2="69.40" stroke="#b5b5b5" stroke-width="0.35"/>
<line x1="287.39" y1="68.50" x2="287.39" y2="69.40" stroke="#b5b5b5" stroke-width="0.35"/>
<line x1="289.84" y1="68.50" x2="289.84" y2="69.40" stroke="#b5b5b5" stroke-width="0.35"/>
<line x1="292.30" y1="68.50" x2="292.30" y2="69.40" stroke="#b5b5b5" stroke-width="0.35"/>
<line x1="294.75" y1="67.60" x2="294.75" y2="69.40" stroke="#7a7a7a" stroke-width="0.40"/>
<line x1="297.20" y1="68.50" x2="297.20" y2="69.40" stroke="#b5b5b5" stroke-width="0.35"/>
<line x1="299.66" y1="68.50" x2="299.66" y2="69.40" stroke="#b5b5b5" stroke-width="0.35"/>
<line x1="302.11" y1="68.50" x2="302.11" y2="69.40" stroke="#b5b5b5" stroke-width="0.35"/>
<line x1="304.57" y1="68.50" x2="304.57" y2="69.40" stroke="#b5b5b5" stroke-width="0.35"/>
<line x1="307.02" y1="66.20" x2="307.02" y2="69.40" stroke="#7a7a7a" stroke-width="0.45"/>
<text x="307.82" y="65.90" font-size="3.70" fill="#5a5a5a" text-anchor="middle">60</text>
<line x1="309.47" y1="68.50" x2="309.47" y2="69.40" stroke="#b5b5b5" stroke-width="0.35"/>
<line x1="311.93" y1="68.50" x2="311.93" y2="69.40" stroke="#b5b5b5" stroke-width="0.35"/>
<line x1="314.38" y1="68.50" x2="314.38" y2="69.40" stroke="#b5b5b5" stroke-width="0.35"/>
<line x1="316.84" y1="68.50" x2="316.84" y2="69.40" stroke="#b5b5b5" stroke-width="0.35"/>
<line x1="319.29" y1="67.60" x2="319.29" y2="69.40" stroke="#7a7a7a" stroke-width="0.40"/>
<line x1="321.74" y1="68.50" x2="321.74" y2="69.40" stroke="#b5b5b5" stroke-width="0.35"/>
<line x1="324.20" y1="68.50" x2="324.20" y2="69.40" stroke="#b5b5b5" stroke-width="0.35"/>
<line x1="326.65" y1="68.50" x2="326.65" y2="69.40" stroke="#b5b5b5" stroke-width="0.35"/>
<line x1="329.11" y1="68.50" x2="329.11" y2="69.40" stroke="#b5b5b5" stroke-width="0.35"/>
<line x1="331.56" y1="66.20" x2="331.56" y2="69.40" stroke="#7a7a7a" stroke-width="0.45"/>
<text x="332.36" y="65.90" font-size="3.70" fill="#5a5a5a" text-anchor="middle">80</text>
<line x1="334.01" y1="68.50" x2="334.01" y2="69.40" stroke="#b5b5b5" stroke-width="0.35"/>
<line x1="336.47" y1="68.50" x2="336.47" y2="69.40" stroke="#b5b5b5" stroke-width="0.35"/>
<line x1="338.92" y1="68.50" x2="338.92" y2="69.40" stroke="#b5b5b5" stroke-width="0.35"/>
<line x1="341.38" y1="68.50" x2="341.38" y2="69.40" stroke="#b5b5b5" stroke-width="0.35"/>
<line x1="343.83" y1="67.60" x2="343.83" y2="69.40" stroke="#7a7a7a" stroke-width="0.40"/>
<line x1="346.28" y1="68.50" x2="346.28" y2="69.40" stroke="#b5b5b5" stroke-width="0.35"/>
<line x1="348.74" y1="68.50" x2="348.74" y2="69.40" stroke="#b5b5b5" stroke-width="0.35"/>
<line x1="351.19" y1="68.50" x2="351.19" y2="69.40" stroke="#b5b5b5" stroke-width="0.35"/>
<line x1="353.65" y1="68.50" x2="353.65" y2="69.40" stroke="#b5b5b5" stroke-width="0.35"/>
<line x1="356.10" y1="66.20" x2="356.10" y2="69.40" stroke="#7a7a7a" stroke-width="0.45"/>
<text x="356.90" y="65.90" font-size="3.70" fill="#5a5a5a" text-anchor="middle">100</text>
<line x1="358.55" y1="68.50" x2="358.55" y2="69.40" stroke="#b5b5b5" stroke-width="0.35"/>
<line x1="361.01" y1="68.50" x2="361.01" y2="69.40" stroke="#b5b5b5" stroke-width="0.35"/>
<line x1="363.46" y1="68.50" x2="363.46" y2="69.40" stroke="#b5b5b5" stroke-width="0.35"/>
<line x1="365.92" y1="68.50" x2="365.92" y2="69.40" stroke="#b5b5b5" stroke-width="0.35"/>
<line x1="368.37" y1="67.60" x2="368.37" y2="69.40" stroke="#7a7a7a" stroke-width="0.40"/>
<line x1="370.82" y1="68.50" x2="370.82" y2="69.40" stroke="#b5b5b5" stroke-width="0.35"/>
<line x1="373.28" y1="68.50" x2="373.28" y2="69.40" stroke="#b5b5b5" stroke-width="0.35"/>
<line x1="375.73" y1="68.50" x2="375.73" y2="69.40" stroke="#b5b5b5" stroke-width="0.35"/>
<line x1="378.19" y1="68.50" x2="378.19" y2="69.40" stroke="#b5b5b5" stroke-width="0.35"/>
<line x1="380.64" y1="66.20" x2="380.64" y2="69.40" stroke="#7a7a7a" stroke-width="0.45"/>
<text x="381.44" y="65.90" font-size="3.70" fill="#5a5a5a" text-anchor="middle">120</text>
<line x1="383.09" y1="68.50" x2="383.09" y2="69.40" stroke="#b5b5b5" stroke-width="0.35"/>
<line x1="385.55" y1="68.50" x2="385.55" y2="69.40" stroke="#b5b5b5" stroke-width="0.35"/>
<line x1="388.00" y1="68.50" x2="388.00" y2="69.40" stroke="#b5b5b5" stroke-width="0.35"/>
<line x1="390.46" y1="68.50" x2="390.46" y2="69.40" stroke="#b5b5b5" stroke-width="0.35"/>
<line x1="392.91" y1="67.60" x2="392.91" y2="69.40" stroke="#7a7a7a" stroke-width="0.40"/>
<line x1="395.36" y1="68.50" x2="395.36" y2="69.40" stroke="#b5b5b5" stroke-width="0.35"/>
<line x1="397.82" y1="68.50" x2="397.82" y2="69.40" stroke="#b5b5b5" stroke-width="0.35"/>
<line x1="400.27" y1="68.50" x2="400.27" y2="69.40" stroke="#b5b5b5" stroke-width="0.35"/>
<line x1="402.73" y1="68.50" x2="402.73" y2="69.40" stroke="#b5b5b5" stroke-width="0.35"/>
<line x1="405.18" y1="66.20" x2="405.18" y2="69.40" stroke="#7a7a7a" stroke-width="0.45"/>
<text x="405.98" y="65.90" font-size="3.70" fill="#5a5a5a" text-anchor="middle">140</text>
<line x1="407.63" y1="68.50" x2="407.63" y2="69.40" stroke="#b5b5b5" stroke-width="0.35"/>
<line x1="410.09" y1="68.50" x2="410.09" y2="69.40" stroke="#b5b5b5" stroke-width="0.35"/>
<line x1="412.54" y1="68.50" x2="412.54" y2="69.40" stroke="#b5b5b5" stroke-width="0.35"/>
<line x1="415.00" y1="68.50" x2="415.00" y2="69.40" stroke="#b5b5b5" stroke-width="0.35"/>
<line x1="417.45" y1="67.60" x2="417.45" y2="69.40" stroke="#7a7a7a" stroke-width="0.40"/>
<line x1="419.90" y1="68.50" x2="419.90" y2="69.40" stroke="#b5b5b5" stroke-width="0.35"/>
<line x1="422.36" y1="68.50" x2="422.36" y2="69.40" stroke="#b5b5b5" stroke-width="0.35"/>
<line x1="424.81" y1="68.50" x2="424.81" y2="69.40" stroke="#b5b5b5" stroke-width="0.35"/>
<line x1="427.27" y1="68.50" x2="427.27" y2="69.40" stroke="#b5b5b5" stroke-width="0.35"/>
<line x1="429.72" y1="66.20" x2="429.72" y2="69.40" stroke="#7a7a7a" stroke-width="0.45"/>
<text x="430.52" y="65.90" font-size="3.70" fill="#5a5a5a" text-anchor="middle">160</text>
<line x1="432.17" y1="68.50" x2="432.17" y2="69.40" stroke="#b5b5b5" stroke-width="0.35"/>
<line x1="434.63" y1="68.50" x2="434.63" y2="69.40" stroke="#b5b5b5" stroke-width="0.35"/>
<line x1="437.08" y1="68.50" x2="437.08" y2="69.40" stroke="#b5b5b5" stroke-width="0.35"/>
<line x1="439.54" y1="68.50" x2="439.54" y2="69.40" stroke="#b5b5b5" stroke-width="0.35"/>
<line x1="441.99" y1="67.60" x2="441.99" y2="69.40" stroke="#7a7a7a" stroke-width="0.40"/>
<line x1="444.44" y1="68.50" x2="444.44" y2="69.40" stroke="#b5b5b5" stroke-width="0.35"/>
<line x1="446.90" y1="68.50" x2="446.90" y2="69.40" stroke="#b5b5b5" stroke-width="0.35"/>
<line x1="449.35" y1="68.50" x2="449.35" y2="69.40" stroke="#b5b5b5" stroke-width="0.35"/>
<line x1="451.81" y1="68.50" x2="451.81" y2="69.40" stroke="#b5b5b5" stroke-width="0.35"/>
<line x1="454.26" y1="66.20" x2="454.26" y2="69.40" stroke="#7a7a7a" stroke-width="0.45"/>
<text x="455.06" y="65.90" font-size="3.70" fill="#5a5a5a" text-anchor="middle">180</text>
<line x1="456.71" y1="68.50" x2="456.71" y2="69.40" stroke="#b5b5b5" stroke-width="0.35"/>
<line x1="459.17" y1="68.50" x2="459.17" y2="69.40" stroke="#b5b5b5" stroke-width="0.35"/>
<line x1="461.62" y1="68.50" x2="461.62" y2="69.40" stroke="#b5b5b5" stroke-width="0.35"/>
<line x1="464.08" y1="68.50" x2="464.08" y2="69.40" stroke="#b5b5b5" stroke-width="0.35"/>
<line x1="466.53" y1="67.60" x2="466.53" y2="69.40" stroke="#7a7a7a" stroke-width="0.40"/>
<line x1="468.98" y1="68.50" x2="468.98" y2="69.40" stroke="#b5b5b5" stroke-width="0.35"/>
<line x1="471.44" y1="68.50" x2="471.44" y2="69.40" stroke="#b5b5b5" stroke-width="0.35"/>
<line x1="473.89" y1="68.50" x2="473.89" y2="69.40" stroke="#b5b5b5" stroke-width="0.35"/>
<line x1="476.35" y1="68.50" x2="476.35" y2="69.40" stroke="#b5b5b5" stroke-width="0.35"/>
<line x1="478.80" y1="66.20" x2="478.80" y2="69.40" stroke="#7a7a7a" stroke-width="0.45"/>
<text x="479.60" y="65.90" font-size="3.70" fill="#5a5a5a" text-anchor="middle">200</text>
<line x1="481.25" y1="68.50" x2="481.25" y2="69.40" stroke="#b5b5b5" stroke-width="0.35"/>
<line x1="483.71" y1="68.50" x2="483.71" y2="69.40" stroke="#b5b5b5" stroke-width="0.35"/>
<line x1="486.16" y1="68.50" x2="486.16" y2="69.40" stroke="#b5b5b5" stroke-width="0.35"/>
<line x1="488.62" y1="68.50" x2="488.62" y2="69.40" stroke="#b5b5b5" stroke-width="0.35"/>
<line x1="491.07" y1="67.60" x2="491.07" y2="69.40" stroke="#7a7a7a" stroke-width="0.40"/>
<line x1="493.52" y1="68.50" x2="493.52" y2="69.40" stroke="#b5b5b5" stroke-width="0.35"/>
<line x1="495.98" y1="68.50" x2="495.98" y2="69.40" stroke="#b5b5b5" stroke-width="0.35"/>
<line x1="498.43" y1="68.50" x2="498.43" y2="69.40" stroke="#b5b5b5" stroke-width="0.35"/>
<line x1="500.89" y1="68.50" x2="500.89" y2="69.40" stroke="#b5b5b5" stroke-width="0.35"/>
<line x1="503.34" y1="66.20" x2="503.34" y2="69.40" stroke="#7a7a7a" stroke-width="0.45"/>
<text x="504.14" y="65.90" font-size="3.70" fill="#5a5a5a" text-anchor="middle">220</text>
<line x1="505.79" y1="68.50" x2="505.79" y2="69.40" stroke="#b5b5b5" stroke-width="0.35"/>
<line x1="508.25" y1="68.50" x2="508.25" y2="69.40" stroke="#b5b5b5" stroke-width="0.35"/>
<line x1="510.70" y1="68.50" x2="510.70" y2="69.40" stroke="#b5b5b5" stroke-width="0.35"/>
<line x1="513.16" y1="68.50" x2="513.16" y2="69.40" stroke="#b5b5b5" stroke-width="0.35"/>
<line x1="515.61" y1="67.60" x2="515.61" y2="69.40" stroke="#7a7a7a" stroke-width="0.40"/>
<line x1="518.06" y1="68.50" x2="518.06" y2="69.40" stroke="#b5b5b5" stroke-width="0.35"/>
<line x1="520.52" y1="68.50" x2="520.52" y2="69.40" stroke="#b5b5b5" stroke-width="0.35"/>
<line x1="522.97" y1="68.50" x2="522.97" y2="69.40" stroke="#b5b5b5" stroke-width="0.35"/>
<line x1="525.43" y1="68.50" x2="525.43" y2="69.40" stroke="#b5b5b5" stroke-width="0.35"/>
<line x1="527.88" y1="66.20" x2="527.88" y2="69.40" stroke="#7a7a7a" stroke-width="0.45"/>
<text x="528.68" y="65.90" font-size="3.70" fill="#5a5a5a" text-anchor="middle">240</text>
<line x1="530.33" y1="68.50" x2="530.33" y2="69.40" stroke="#b5b5b5" stroke-width="0.35"/>
<line x1="532.79" y1="68.50" x2="532.79" y2="69.40" stroke="#b5b5b5" stroke-width="0.35"/>
<line x1="535.24" y1="68.50" x2="535.24" y2="69.40" stroke="#b5b5b5" stroke-width="0.35"/>
<line x1="537.70" y1="68.50" x2="537.70" y2="69.40" stroke="#b5b5b5" stroke-width="0.35"/>
<line x1="540.15" y1="67.60" x2="540.15" y2="69.40" stroke="#7a7a7a" stroke-width="0.40"/>
<line x1="542.60" y1="68.50" x2="542.60" y2="69.40" stroke="#b5b5b5" stroke-width="0.35"/>
<line x1="545.06" y1="68.50" x2="545.06" y2="69.40" stroke="#b5b5b5" stroke-width="0.35"/>
<line x1="547.51" y1="68.50" x2="547.51" y2="69.40" stroke="#b5b5b5" stroke-width="0.35"/>
<line x1="549.97" y1="68.50" x2="549.97" y2="69.40" stroke="#b5b5b5" stroke-width="0.35"/>
<line x1="552.42" y1="66.20" x2="552.42" y2="69.40" stroke="#7a7a7a" stroke-width="0.45"/>
<text x="553.22" y="65.90" font-size="3.70" fill="#5a5a5a" text-anchor="middle">260</text>
<line x1="554.87" y1="68.50" x2="554.87" y2="69.40" stroke="#b5b5b5" stroke-width="0.35"/>
<line x1="557.33" y1="68.50" x2="557.33" y2="69.40" stroke="#b5b5b5" stroke-width="0.35"/>
<line x1="559.78" y1="68.50" x2="559.78" y2="69.40" stroke="#b5b5b5" stroke-width="0.35"/>
<line x1="562.24" y1="68.50" x2="562.24" y2="69.40" stroke="#b5b5b5" stroke-width="0.35"/>
<line x1="564.69" y1="67.60" x2="564.69" y2="69.40" stroke="#7a7a7a" stroke-width="0.40"/>
<line x1="567.14" y1="68.50" x2="567.14" y2="69.40" stroke="#b5b5b5" stroke-width="0.35"/>
<line x1="569.60" y1="68.50" x2="569.60" y2="69.40" stroke="#b5b5b5" stroke-width="0.35"/>
<line x1="572.05" y1="68.50" x2="572.05" y2="69.40" stroke="#b5b5b5" stroke-width="0.35"/>
<line x1="574.51" y1="68.50" x2="574.51" y2="69.40" stroke="#b5b5b5" stroke-width="0.35"/>
<line x1="576.96" y1="66.20" x2="576.96" y2="69.40" stroke="#7a7a7a" stroke-width="0.45"/>
<text x="577.76" y="65.90" font-size="3.70" fill="#5a5a5a" text-anchor="middle">280</text>
<line x1="579.41" y1="68.50" x2="579.41" y2="69.40" stroke="#b5b5b5" stroke-width="0.35"/>
<line x1="581.87" y1="68.50" x2="581.87" y2="69.40" stroke="#b5b5b5" stroke-width="0.35"/>
<line x1="584.32" y1="68.50" x2="584.32" y2="69.40" stroke="#b5b5b5" stroke-width="0.35"/>
<line x1="586.78" y1="68.50" x2="586.78" y2="69.40" stroke="#b5b5b5" stroke-width="0.35"/>
<line x1="589.23" y1="67.60" x2="589.23" y2="69.40" stroke="#7a7a7a" stroke-width="0.40"/>
<line x1="591.68" y1="68.50" x2="591.68" y2="69.40" stroke="#b5b5b5" stroke-width="0.35"/>
<line x1="594.14" y1="68.50" x2="594.14" y2="69.40" stroke="#b5b5b5" stroke-width="0.35"/>
<line x1="596.59" y1="68.50" x2="596.59" y2="69.40" stroke="#b5b5b5" stroke-width="0.35"/>
<line x1="599.05" y1="68.50" x2="599.05" y2="69.40" stroke="#b5b5b5" stroke-width="0.35"/>
<line x1="601.50" y1="66.20" x2="601.50" y2="69.40" stroke="#7a7a7a" stroke-width="0.45"/>
<text x="602.30" y="65.90" font-size="3.70" fill="#5a5a5a" text-anchor="middle">300</text>
<line x1="603.95" y1="68.50" x2="603.95" y2="69.40" stroke="#b5b5b5" stroke-width="0.35"/>
<line x1="606.41" y1="68.50" x2="606.41" y2="69.40" stroke="#b5b5b5" stroke-width="0.35"/>
<line x1="608.86" y1="68.50" x2="608.86" y2="69.40" stroke="#b5b5b5" stroke-width="0.35"/>
<line x1="611.32" y1="68.50" x2="611.32" y2="69.40" stroke="#b5b5b5" stroke-width="0.35"/>
<line x1="613.77" y1="67.60" x2="613.77" y2="69.40" stroke="#7a7a7a" stroke-width="0.40"/>
<line x1="616.22" y1="68.50" x2="616.22" y2="69.40" stroke="#b5b5b5" stroke-width="0.35"/>
<line x1="618.68" y1="68.50" x2="618.68" y2="69.40" stroke="#b5b5b5" stroke-width="0.35"/>
<line x1="621.13" y1="68.50" x2="621.13" y2="69.40" stroke="#b5b5b5" stroke-width="0.35"/>
<line x1="623.59" y1="68.50" x2="623.59" y2="69.40" stroke="#b5b5b5" stroke-width="0.35"/>
<line x1="626.04" y1="66.20" x2="626.04" y2="69.40" stroke="#7a7a7a" stroke-width="0.45"/>
<text x="626.84" y="65.90" font-size="3.70" fill="#5a5a5a" text-anchor="middle">320</text>
<line x1="628.49" y1="68.50" x2="628.49" y2="69.40" stroke="#b5b5b5" stroke-width="0.35"/>
<line x1="630.95" y1="68.50" x2="630.95" y2="69.40" stroke="#b5b5b5" stroke-width="0.35"/>
<line x1="633.40" y1="68.50" x2="633.40" y2="69.40" stroke="#b5b5b5" stroke-width="0.35"/>
<line x1="635.86" y1="68.50" x2="635.86" y2="69.40" stroke="#b5b5b5" stroke-width="0.35"/>
<line x1="638.31" y1="67.60" x2="638.31" y2="69.40" stroke="#7a7a7a" stroke-width="0.40"/>
<line x1="640.76" y1="68.50" x2="640.76" y2="69.40" stroke="#b5b5b5" stroke-width="0.35"/>
<line x1="643.22" y1="68.50" x2="643.22" y2="69.40" stroke="#b5b5b5" stroke-width="0.35"/>
<line x1="645.67" y1="68.50" x2="645.67" y2="69.40" stroke="#b5b5b5" stroke-width="0.35"/>
<line x1="648.13" y1="68.50" x2="648.13" y2="69.40" stroke="#b5b5b5" stroke-width="0.35"/>
<line x1="650.58" y1="66.20" x2="650.58" y2="69.40" stroke="#7a7a7a" stroke-width="0.45"/>
<text x="651.38" y="65.90" font-size="3.70" fill="#5a5a5a" text-anchor="middle">340</text>
<line x1="653.03" y1="68.50" x2="653.03" y2="69.40" stroke="#b5b5b5" stroke-width="0.35"/>
<line x1="655.49" y1="68.50" x2="655.49" y2="69.40" stroke="#b5b5b5" stroke-width="0.35"/>
<line x1="657.94" y1="68.50" x2="657.94" y2="69.40" stroke="#b5b5b5" stroke-width="0.35"/>
<line x1="660.40" y1="68.50" x2="660.40" y2="69.40" stroke="#b5b5b5" stroke-width="0.35"/>
<line x1="662.85" y1="67.60" x2="662.85" y2="69.40" stroke="#7a7a7a" stroke-width="0.40"/>
<line x1="665.30" y1="68.50" x2="665.30" y2="69.40" stroke="#b5b5b5" stroke-width="0.35"/>
<line x1="667.76" y1="68.50" x2="667.76" y2="69.40" stroke="#b5b5b5" stroke-width="0.35"/>
<line x1="670.21" y1="68.50" x2="670.21" y2="69.40" stroke="#b5b5b5" stroke-width="0.35"/>
<line x1="672.67" y1="68.50" x2="672.67" y2="69.40" stroke="#b5b5b5" stroke-width="0.35"/>
<line x1="675.12" y1="66.20" x2="675.12" y2="69.40" stroke="#7a7a7a" stroke-width="0.45"/>
<line x1="677.57" y1="68.50" x2="677.57" y2="69.40" stroke="#b5b5b5" stroke-width="0.35"/>
<line x1="680.03" y1="68.50" x2="680.03" y2="69.40" stroke="#b5b5b5" stroke-width="0.35"/>
<line x1="682.48" y1="68.50" x2="682.48" y2="69.40" stroke="#b5b5b5" stroke-width="0.35"/>
<text x="657.50" y="66.00" font-size="3.40" fill="#777" textLength="25.00" lengthAdjust="spacingAndGlyphs">миллиметры</text>
<path d="M15.4 63.6 l1.6 0 l0 1.6 M16.0 64.2 l2.2 2.2" fill="none" stroke="#888" stroke-width="0.40"/>
<line x1="21.30" y1="424.02" x2="22.20" y2="424.02" stroke="#b5b5b5" stroke-width="0.35"/>
<line x1="21.30" y1="421.56" x2="22.20" y2="421.56" stroke="#b5b5b5" stroke-width="0.35"/>
<line x1="19.00" y1="419.11" x2="22.20" y2="419.11" stroke="#7a7a7a" stroke-width="0.45"/>
<text transform="translate(18.6 418.31) rotate(-90)" font-size="3.7" fill="#6f6f6f" text-anchor="middle">20</text>
<line x1="21.30" y1="416.66" x2="22.20" y2="416.66" stroke="#b5b5b5" stroke-width="0.35"/>
<line x1="21.30" y1="414.20" x2="22.20" y2="414.20" stroke="#b5b5b5" stroke-width="0.35"/>
<line x1="21.30" y1="411.75" x2="22.20" y2="411.75" stroke="#b5b5b5" stroke-width="0.35"/>
<line x1="21.30" y1="409.30" x2="22.20" y2="409.30" stroke="#b5b5b5" stroke-width="0.35"/>
<line x1="20.40" y1="406.85" x2="22.20" y2="406.85" stroke="#7a7a7a" stroke-width="0.40"/>
<line x1="21.30" y1="404.39" x2="22.20" y2="404.39" stroke="#b5b5b5" stroke-width="0.35"/>
<line x1="21.30" y1="401.94" x2="22.20" y2="401.94" stroke="#b5b5b5" stroke-width="0.35"/>
<line x1="21.30" y1="399.49" x2="22.20" y2="399.49" stroke="#b5b5b5" stroke-width="0.35"/>
<line x1="21.30" y1="397.03" x2="22.20" y2="397.03" stroke="#b5b5b5" stroke-width="0.35"/>
<line x1="19.00" y1="394.58" x2="22.20" y2="394.58" stroke="#7a7a7a" stroke-width="0.45"/>
<text transform="translate(18.6 393.78) rotate(-90)" font-size="3.7" fill="#6f6f6f" text-anchor="middle">40</text>
<line x1="21.30" y1="392.13" x2="22.20" y2="392.13" stroke="#b5b5b5" stroke-width="0.35"/>
<line x1="21.30" y1="389.67" x2="22.20" y2="389.67" stroke="#b5b5b5" stroke-width="0.35"/>
<line x1="21.30" y1="387.22" x2="22.20" y2="387.22" stroke="#b5b5b5" stroke-width="0.35"/>
<line x1="21.30" y1="384.77" x2="22.20" y2="384.77" stroke="#b5b5b5" stroke-width="0.35"/>
<line x1="20.40" y1="382.31" x2="22.20" y2="382.31" stroke="#7a7a7a" stroke-width="0.40"/>
<line x1="21.30" y1="379.86" x2="22.20" y2="379.86" stroke="#b5b5b5" stroke-width="0.35"/>
<line x1="21.30" y1="377.41" x2="22.20" y2="377.41" stroke="#b5b5b5" stroke-width="0.35"/>
<line x1="21.30" y1="374.96" x2="22.20" y2="374.96" stroke="#b5b5b5" stroke-width="0.35"/>
<line x1="21.30" y1="372.50" x2="22.20" y2="372.50" stroke="#b5b5b5" stroke-width="0.35"/>
<line x1="19.00" y1="370.05" x2="22.20" y2="370.05" stroke="#7a7a7a" stroke-width="0.45"/>
<text transform="translate(18.6 369.25) rotate(-90)" font-size="3.7" fill="#6f6f6f" text-anchor="middle">60</text>
<line x1="21.30" y1="367.60" x2="22.20" y2="367.60" stroke="#b5b5b5" stroke-width="0.35"/>
<line x1="21.30" y1="365.14" x2="22.20" y2="365.14" stroke="#b5b5b5" stroke-width="0.35"/>
<line x1="21.30" y1="362.69" x2="22.20" y2="362.69" stroke="#b5b5b5" stroke-width="0.35"/>
<line x1="21.30" y1="360.24" x2="22.20" y2="360.24" stroke="#b5b5b5" stroke-width="0.35"/>
<line x1="20.40" y1="357.78" x2="22.20" y2="357.78" stroke="#7a7a7a" stroke-width="0.40"/>
<line x1="21.30" y1="355.33" x2="22.20" y2="355.33" stroke="#b5b5b5" stroke-width="0.35"/>
<line x1="21.30" y1="352.88" x2="22.20" y2="352.88" stroke="#b5b5b5" stroke-width="0.35"/>
<line x1="21.30" y1="350.43" x2="22.20" y2="350.43" stroke="#b5b5b5" stroke-width="0.35"/>
<line x1="21.30" y1="347.97" x2="22.20" y2="347.97" stroke="#b5b5b5" stroke-width="0.35"/>
<line x1="19.00" y1="345.52" x2="22.20" y2="345.52" stroke="#7a7a7a" stroke-width="0.45"/>
<text transform="translate(18.6 344.72) rotate(-90)" font-size="3.7" fill="#6f6f6f" text-anchor="middle">80</text>
<line x1="21.30" y1="343.07" x2="22.20" y2="343.07" stroke="#b5b5b5" stroke-width="0.35"/>
<line x1="21.30" y1="340.61" x2="22.20" y2="340.61" stroke="#b5b5b5" stroke-width="0.35"/>
<line x1="21.30" y1="338.16" x2="22.20" y2="338.16" stroke="#b5b5b5" stroke-width="0.35"/>
<line x1="21.30" y1="335.71" x2="22.20" y2="335.71" stroke="#b5b5b5" stroke-width="0.35"/>
<line x1="20.40" y1="333.25" x2="22.20" y2="333.25" stroke="#7a7a7a" stroke-width="0.40"/>
<line x1="21.30" y1="330.80" x2="22.20" y2="330.80" stroke="#b5b5b5" stroke-width="0.35"/>
<line x1="21.30" y1="328.35" x2="22.20" y2="328.35" stroke="#b5b5b5" stroke-width="0.35"/>
<line x1="21.30" y1="325.90" x2="22.20" y2="325.90" stroke="#b5b5b5" stroke-width="0.35"/>
<line x1="21.30" y1="323.44" x2="22.20" y2="323.44" stroke="#b5b5b5" stroke-width="0.35"/>
<line x1="19.00" y1="320.99" x2="22.20" y2="320.99" stroke="#7a7a7a" stroke-width="0.45"/>
<text transform="translate(18.6 320.19) rotate(-90)" font-size="3.7" fill="#6f6f6f" text-anchor="middle">100</text>
<line x1="21.30" y1="318.54" x2="22.20" y2="318.54" stroke="#b5b5b5" stroke-width="0.35"/>
<line x1="21.30" y1="316.08" x2="22.20" y2="316.08" stroke="#b5b5b5" stroke-width="0.35"/>
<line x1="21.30" y1="313.63" x2="22.20" y2="313.63" stroke="#b5b5b5" stroke-width="0.35"/>
<line x1="21.30" y1="311.18" x2="22.20" y2="311.18" stroke="#b5b5b5" stroke-width="0.35"/>
<line x1="20.40" y1="308.73" x2="22.20" y2="308.73" stroke="#7a7a7a" stroke-width="0.40"/>
<line x1="21.30" y1="306.27" x2="22.20" y2="306.27" stroke="#b5b5b5" stroke-width="0.35"/>
<line x1="21.30" y1="303.82" x2="22.20" y2="303.82" stroke="#b5b5b5" stroke-width="0.35"/>
<line x1="21.30" y1="301.37" x2="22.20" y2="301.37" stroke="#b5b5b5" stroke-width="0.35"/>
<line x1="21.30" y1="298.91" x2="22.20" y2="298.91" stroke="#b5b5b5" stroke-width="0.35"/>
<line x1="19.00" y1="296.46" x2="22.20" y2="296.46" stroke="#7a7a7a" stroke-width="0.45"/>
<text transform="translate(18.6 295.66) rotate(-90)" font-size="3.7" fill="#6f6f6f" text-anchor="middle">120</text>
<line x1="21.30" y1="294.01" x2="22.20" y2="294.01" stroke="#b5b5b5" stroke-width="0.35"/>
<line x1="21.30" y1="291.55" x2="22.20" y2="291.55" stroke="#b5b5b5" stroke-width="0.35"/>
<line x1="21.30" y1="289.10" x2="22.20" y2="289.10" stroke="#b5b5b5" stroke-width="0.35"/>
<line x1="21.30" y1="286.65" x2="22.20" y2="286.65" stroke="#b5b5b5" stroke-width="0.35"/>
<line x1="20.40" y1="284.19" x2="22.20" y2="284.19" stroke="#7a7a7a" stroke-width="0.40"/>
<line x1="21.30" y1="281.74" x2="22.20" y2="281.74" stroke="#b5b5b5" stroke-width="0.35"/>
<line x1="21.30" y1="279.29" x2="22.20" y2="279.29" stroke="#b5b5b5" stroke-width="0.35"/>
<line x1="21.30" y1="276.84" x2="22.20" y2="276.84" stroke="#b5b5b5" stroke-width="0.35"/>
<line x1="21.30" y1="274.38" x2="22.20" y2="274.38" stroke="#b5b5b5" stroke-width="0.35"/>
<line x1="19.00" y1="271.93" x2="22.20" y2="271.93" stroke="#7a7a7a" stroke-width="0.45"/>
<text transform="translate(18.6 271.13) rotate(-90)" font-size="3.7" fill="#6f6f6f" text-anchor="middle">140</text>
<line x1="21.30" y1="269.48" x2="22.20" y2="269.48" stroke="#b5b5b5" stroke-width="0.35"/>
<line x1="21.30" y1="267.02" x2="22.20" y2="267.02" stroke="#b5b5b5" stroke-width="0.35"/>
<line x1="21.30" y1="264.57" x2="22.20" y2="264.57" stroke="#b5b5b5" stroke-width="0.35"/>
<line x1="21.30" y1="262.12" x2="22.20" y2="262.12" stroke="#b5b5b5" stroke-width="0.35"/>
<line x1="20.40" y1="259.67" x2="22.20" y2="259.67" stroke="#7a7a7a" stroke-width="0.40"/>
<line x1="21.30" y1="257.21" x2="22.20" y2="257.21" stroke="#b5b5b5" stroke-width="0.35"/>
<line x1="21.30" y1="254.76" x2="22.20" y2="254.76" stroke="#b5b5b5" stroke-width="0.35"/>
<line x1="21.30" y1="252.31" x2="22.20" y2="252.31" stroke="#b5b5b5" stroke-width="0.35"/>
<line x1="21.30" y1="249.85" x2="22.20" y2="249.85" stroke="#b5b5b5" stroke-width="0.35"/>
<line x1="19.00" y1="247.40" x2="22.20" y2="247.40" stroke="#7a7a7a" stroke-width="0.45"/>
<text transform="translate(18.6 246.60) rotate(-90)" font-size="3.7" fill="#6f6f6f" text-anchor="middle">160</text>
<line x1="21.30" y1="244.95" x2="22.20" y2="244.95" stroke="#b5b5b5" stroke-width="0.35"/>
<line x1="21.30" y1="242.49" x2="22.20" y2="242.49" stroke="#b5b5b5" stroke-width="0.35"/>
<line x1="21.30" y1="240.04" x2="22.20" y2="240.04" stroke="#b5b5b5" stroke-width="0.35"/>
<line x1="21.30" y1="237.59" x2="22.20" y2="237.59" stroke="#b5b5b5" stroke-width="0.35"/>
<line x1="20.40" y1="235.14" x2="22.20" y2="235.14" stroke="#7a7a7a" stroke-width="0.40"/>
<line x1="21.30" y1="232.68" x2="22.20" y2="232.68" stroke="#b5b5b5" stroke-width="0.35"/>
<line x1="21.30" y1="230.23" x2="22.20" y2="230.23" stroke="#b5b5b5" stroke-width="0.35"/>
<line x1="21.30" y1="227.78" x2="22.20" y2="227.78" stroke="#b5b5b5" stroke-width="0.35"/>
<line x1="21.30" y1="225.32" x2="22.20" y2="225.32" stroke="#b5b5b5" stroke-width="0.35"/>
<line x1="19.00" y1="222.87" x2="22.20" y2="222.87" stroke="#7a7a7a" stroke-width="0.45"/>
<text transform="translate(18.6 222.07) rotate(-90)" font-size="3.7" fill="#6f6f6f" text-anchor="middle">180</text>
<line x1="21.30" y1="220.42" x2="22.20" y2="220.42" stroke="#b5b5b5" stroke-width="0.35"/>
<line x1="21.30" y1="217.96" x2="22.20" y2="217.96" stroke="#b5b5b5" stroke-width="0.35"/>
<line x1="21.30" y1="215.51" x2="22.20" y2="215.51" stroke="#b5b5b5" stroke-width="0.35"/>
<line x1="21.30" y1="213.06" x2="22.20" y2="213.06" stroke="#b5b5b5" stroke-width="0.35"/>
<line x1="20.40" y1="210.61" x2="22.20" y2="210.61" stroke="#7a7a7a" stroke-width="0.40"/>
<line x1="21.30" y1="208.15" x2="22.20" y2="208.15" stroke="#b5b5b5" stroke-width="0.35"/>
<line x1="21.30" y1="205.70" x2="22.20" y2="205.70" stroke="#b5b5b5" stroke-width="0.35"/>
<line x1="21.30" y1="203.25" x2="22.20" y2="203.25" stroke="#b5b5b5" stroke-width="0.35"/>
<line x1="21.30" y1="200.79" x2="22.20" y2="200.79" stroke="#b5b5b5" stroke-width="0.35"/>
<line x1="19.00" y1="198.34" x2="22.20" y2="198.34" stroke="#7a7a7a" stroke-width="0.45"/>
<text transform="translate(18.6 197.54) rotate(-90)" font-size="3.7" fill="#6f6f6f" text-anchor="middle">200</text>
<line x1="21.30" y1="195.89" x2="22.20" y2="195.89" stroke="#b5b5b5" stroke-width="0.35"/>
<line x1="21.30" y1="193.43" x2="22.20" y2="193.43" stroke="#b5b5b5" stroke-width="0.35"/>
<line x1="21.30" y1="190.98" x2="22.20" y2="190.98" stroke="#b5b5b5" stroke-width="0.35"/>
<line x1="21.30" y1="188.53" x2="22.20" y2="188.53" stroke="#b5b5b5" stroke-width="0.35"/>
<line x1="20.40" y1="186.08" x2="22.20" y2="186.08" stroke="#7a7a7a" stroke-width="0.40"/>
<line x1="21.30" y1="183.62" x2="22.20" y2="183.62" stroke="#b5b5b5" stroke-width="0.35"/>
<line x1="21.30" y1="181.17" x2="22.20" y2="181.17" stroke="#b5b5b5" stroke-width="0.35"/>
<line x1="21.30" y1="178.72" x2="22.20" y2="178.72" stroke="#b5b5b5" stroke-width="0.35"/>
<line x1="21.30" y1="176.26" x2="22.20" y2="176.26" stroke="#b5b5b5" stroke-width="0.35"/>
<line x1="19.00" y1="173.81" x2="22.20" y2="173.81" stroke="#7a7a7a" stroke-width="0.45"/>
<text transform="translate(18.6 173.01) rotate(-90)" font-size="3.7" fill="#6f6f6f" text-anchor="middle">220</text>
<line x1="21.30" y1="171.36" x2="22.20" y2="171.36" stroke="#b5b5b5" stroke-width="0.35"/>
<line x1="21.30" y1="168.90" x2="22.20" y2="168.90" stroke="#b5b5b5" stroke-width="0.35"/>
<line x1="21.30" y1="166.45" x2="22.20" y2="166.45" stroke="#b5b5b5" stroke-width="0.35"/>
<line x1="21.30" y1="164.00" x2="22.20" y2="164.00" stroke="#b5b5b5" stroke-width="0.35"/>
<line x1="20.40" y1="161.55" x2="22.20" y2="161.55" stroke="#7a7a7a" stroke-width="0.40"/>
<line x1="21.30" y1="159.09" x2="22.20" y2="159.09" stroke="#b5b5b5" stroke-width="0.35"/>
<line x1="21.30" y1="156.64" x2="22.20" y2="156.64" stroke="#b5b5b5" stroke-width="0.35"/>
<line x1="21.30" y1="154.19" x2="22.20" y2="154.19" stroke="#b5b5b5" stroke-width="0.35"/>
<line x1="21.30" y1="151.73" x2="22.20" y2="151.73" stroke="#b5b5b5" stroke-width="0.35"/>
<line x1="19.00" y1="149.28" x2="22.20" y2="149.28" stroke="#7a7a7a" stroke-width="0.45"/>
<text transform="translate(18.6 148.48) rotate(-90)" font-size="3.7" fill="#6f6f6f" text-anchor="middle">240</text>
<line x1="21.30" y1="146.83" x2="22.20" y2="146.83" stroke="#b5b5b5" stroke-width="0.35"/>
<line x1="21.30" y1="144.37" x2="22.20" y2="144.37" stroke="#b5b5b5" stroke-width="0.35"/>
<line x1="21.30" y1="141.92" x2="22.20" y2="141.92" stroke="#b5b5b5" stroke-width="0.35"/>
<line x1="21.30" y1="139.47" x2="22.20" y2="139.47" stroke="#b5b5b5" stroke-width="0.35"/>
<line x1="20.40" y1="137.02" x2="22.20" y2="137.02" stroke="#7a7a7a" stroke-width="0.40"/>
<line x1="21.30" y1="134.56" x2="22.20" y2="134.56" stroke="#b5b5b5" stroke-width="0.35"/>
<line x1="21.30" y1="132.11" x2="22.20" y2="132.11" stroke="#b5b5b5" stroke-width="0.35"/>
<line x1="21.30" y1="129.66" x2="22.20" y2="129.66" stroke="#b5b5b5" stroke-width="0.35"/>
<line x1="21.30" y1="127.20" x2="22.20" y2="127.20" stroke="#b5b5b5" stroke-width="0.35"/>
<line x1="19.00" y1="124.75" x2="22.20" y2="124.75" stroke="#7a7a7a" stroke-width="0.45"/>
<text transform="translate(18.6 123.95) rotate(-90)" font-size="3.7" fill="#6f6f6f" text-anchor="middle">260</text>
<line x1="21.30" y1="122.30" x2="22.20" y2="122.30" stroke="#b5b5b5" stroke-width="0.35"/>
<line x1="21.30" y1="119.84" x2="22.20" y2="119.84" stroke="#b5b5b5" stroke-width="0.35"/>
<line x1="21.30" y1="117.39" x2="22.20" y2="117.39" stroke="#b5b5b5" stroke-width="0.35"/>
<line x1="21.30" y1="114.94" x2="22.20" y2="114.94" stroke="#b5b5b5" stroke-width="0.35"/>
<line x1="20.40" y1="112.49" x2="22.20" y2="112.49" stroke="#7a7a7a" stroke-width="0.40"/>
<line x1="21.30" y1="110.03" x2="22.20" y2="110.03" stroke="#b5b5b5" stroke-width="0.35"/>
<line x1="21.30" y1="107.58" x2="22.20" y2="107.58" stroke="#b5b5b5" stroke-width="0.35"/>
<line x1="21.30" y1="105.13" x2="22.20" y2="105.13" stroke="#b5b5b5" stroke-width="0.35"/>
<line x1="21.30" y1="102.67" x2="22.20" y2="102.67" stroke="#b5b5b5" stroke-width="0.35"/>
<line x1="19.00" y1="100.22" x2="22.20" y2="100.22" stroke="#7a7a7a" stroke-width="0.45"/>
<text transform="translate(18.6 99.42) rotate(-90)" font-size="3.7" fill="#6f6f6f" text-anchor="middle">280</text>
<line x1="21.30" y1="97.77" x2="22.20" y2="97.77" stroke="#b5b5b5" stroke-width="0.35"/>
<line x1="21.30" y1="95.31" x2="22.20" y2="95.31" stroke="#b5b5b5" stroke-width="0.35"/>
<line x1="21.30" y1="92.86" x2="22.20" y2="92.86" stroke="#b5b5b5" stroke-width="0.35"/>
<line x1="21.30" y1="90.41" x2="22.20" y2="90.41" stroke="#b5b5b5" stroke-width="0.35"/>
<line x1="20.40" y1="87.96" x2="22.20" y2="87.96" stroke="#7a7a7a" stroke-width="0.40"/>
<line x1="21.30" y1="85.50" x2="22.20" y2="85.50" stroke="#b5b5b5" stroke-width="0.35"/>
<line x1="21.30" y1="83.05" x2="22.20" y2="83.05" stroke="#b5b5b5" stroke-width="0.35"/>
<line x1="21.30" y1="80.60" x2="22.20" y2="80.60" stroke="#b5b5b5" stroke-width="0.35"/>
<line x1="21.30" y1="78.14" x2="22.20" y2="78.14" stroke="#b5b5b5" stroke-width="0.35"/>
<line x1="19.00" y1="75.69" x2="22.20" y2="75.69" stroke="#7a7a7a" stroke-width="0.45"/>
<text transform="translate(18.6 74.89) rotate(-90)" font-size="3.7" fill="#6f6f6f" text-anchor="middle">300</text>
<line x1="21.30" y1="73.24" x2="22.20" y2="73.24" stroke="#b5b5b5" stroke-width="0.35"/>
<line x1="21.30" y1="70.78" x2="22.20" y2="70.78" stroke="#b5b5b5" stroke-width="0.35"/>
<line x1="14.10" y1="165.00" x2="21.40" y2="165.00" stroke="#333" stroke-width="0.50" stroke-dasharray="1 1"/>
<line x1="667.60" y1="62.00" x2="667.60" y2="69.40" stroke="#333" stroke-width="0.50" stroke-dasharray="1 1"/>
<path d="M679.0 74.2 l1.6 -1.6 l1.6 1.6" fill="none" stroke="#333" stroke-width="0.75"/>
<path d="M679.0 422.0 l1.6 1.6 l1.6 -1.6" fill="none" stroke="#333" stroke-width="0.75"/>
<path d="M672.4 429.0 l1.6 1.6 l-1.6 1.6" fill="none" stroke="#333" stroke-width="0.75"/>
<circle cx="680.0" cy="430.0" r="1.5" fill="none" stroke="#555" stroke-width="0.5"/>
<line x1="681.20" y1="431.20" x2="682.60" y2="432.60" stroke="#555" stroke-width="0.60"/>
<path d="M358.2 429.0 l-1.6 1.6 l1.6 1.6" fill="none" stroke="#333" stroke-width="0.75"/>
<path d="M668.0 436.6 l1.4 1.4 l-1.4 1.4 M676.0 436.6 l1.4 1.4 l-1.4 1.4 M677.6 436.6 l1.4 1.4 l-1.4 1.4" fill="none" stroke="#d2d2d2" stroke-width="0.50"/>
<path d="M24.4 428.6 h2.4 l1 1 v3 h-3.4z" fill="none" stroke="#9a9a9a" stroke-width="0.50"/>
<path d="M30.8 428.6 v4 M34.6 428.6 l-2.8 2 l2.8 2z" fill="#9a9a9a" stroke="#9a9a9a" stroke-width="0.40"/>
<path d="M41.6 428.6 l-2.8 2 l2.8 2z" fill="#9a9a9a"/>
<line x1="45.60" y1="427.60" x2="45.60" y2="433.40" stroke="#d6d6d6" stroke-width="0.40"/>
<text x="50.20" y="432.20" font-size="3.80" fill="#aaa">из</text>
<line x1="59.60" y1="427.60" x2="59.60" y2="433.40" stroke="#d6d6d6" stroke-width="0.40"/>
<path d="M63.8 428.6 l2.8 2 l-2.8 2z" fill="#9a9a9a"/>
<path d="M70.6 428.6 l2.8 2 l-2.8 2z M74.6 428.6 v4" fill="#9a9a9a" stroke="#9a9a9a" stroke-width="0.40"/>
<path d="M78.6 428.6 h2.4 l1 1 v3 h-3.4z" fill="none" stroke="#666" stroke-width="0.50"/>
<path d="M20.2 437.8 l1.2 1.0 l-1.2 1.0z" fill="#555"/>
<line x1="27.80" y1="441.80" x2="31.40" y2="438.00" stroke="#222" stroke-width="1.00"/>
<path d="M30.6 437.4 l1.6 -1.6 l1.2 1.2 l-1.6 1.6z" fill="#111"/>
<path d="M38.8 437.2 l-1.6 1.6 l1.6 1.6" fill="none" stroke="#d0d0d0" stroke-width="0.50"/>
<circle cx="8.4" cy="452.0" r="2.2" fill="none" stroke="#222" stroke-width="1.3"/>
<circle cx="8.4" cy="452.0" r="3.1" fill="none" stroke="#222" stroke-width="0.8" stroke-dasharray="1.1 1.35"/>
<path d="M11.4 455.4 l1.0 0 l0 -1.0z" fill="#444"/>
<path d="M635.4 452.0 l3.0 -2.8 l3.0 2.8 l-3.0 2.6z" fill="#fbfbfb" stroke="#333" stroke-width="0.50"/>
<path d="M637.6 455.6 q1.6 -2.0 3.2 0z" fill="#c83a3a"/>
<path d="M727.4 448.0 l1.4 2.8 l-0.6 2.4 h-1.6 l-0.6 -2.4z" fill="#f4f4f4" stroke="#444" stroke-width="0.50"/>
<path d="M726.3 454.0 h2.2 v0.9 h-2.2z" fill="#555"/>
<rect x="838.20" y="448.00" width="6.80" height="1.60" fill="#3f6fb0"/>
<rect x="838.20" y="449.60" width="6.80" height="2.60" fill="#d45a5a"/>
<rect x="838.20" y="452.20" width="6.80" height="2.00" fill="#3f9fb0"/>
<path d="M840.2 454.2 h2.8 l-1.4 1.6z" fill="#3f9fb0"/>
<rect x="7.10" y="465.80" width="3.10" height="3.20" fill="#f2f2f2"/>
<rect x="10.60" y="465.80" width="3.10" height="3.20" fill="#f2f2f2"/>
<rect x="7.10" y="469.40" width="3.10" height="3.20" fill="#f2f2f2"/>
<rect x="10.60" y="469.40" width="3.10" height="3.20" fill="#f2f2f2"/>
<circle cx="33.2" cy="467.4" r="2.5" fill="none" stroke="#f2f2f2" stroke-width="0.7"/>
<line x1="31.40" y1="469.40" x2="28.60" y2="472.60" stroke="#f2f2f2" stroke-width="0.80"/>
<rect x="49.90" y="466.50" width="5.80" height="4.90" fill="none" stroke="#c4c4c4" stroke-width="0.80"/>
<path d="M48.6 467.4 v3.2 M57.0 467.4 v3.2" fill="none" stroke="#b8b8b8" stroke-width="0.70"/>
<path d="M55.7 467.6 h1.3 M55.7 470.4 h1.3" fill="none" stroke="#b8b8b8" stroke-width="0.50"/>
<rect x="70.70" y="465.80" width="9.20" height="6.50" fill="#3195dc"/>
<path d="M72.0 467.2 h2.4 v2.2 h-2.4z M76.0 467.0 l1.2 1.3 l1.4 -1.1" fill="#cfe6f8" stroke="#cfe6f8" stroke-width="0.40"/>
<rect x="93.80" y="463.80" width="7.60" height="10.60" fill="#4a7fa8"/>
<rect x="94.80" y="464.80" width="5.60" height="2.40" fill="#d6e6f2"/>
<rect x="94.80" y="468.20" width="1.50" height="1.50" fill="#e8eef4"/>
<rect x="96.80" y="468.20" width="1.50" height="1.50" fill="#e8eef4"/>
<rect x="98.80" y="468.20" width="1.50" height="1.50" fill="#e8eef4"/>
<rect x="94.80" y="470.20" width="1.50" height="1.50" fill="#e8eef4"/>
<rect x="96.80" y="470.20" width="1.50" height="1.50" fill="#e8eef4"/>
<rect x="98.80" y="470.20" width="1.50" height="1.50" fill="#e8eef4"/>
<rect x="94.80" y="472.20" width="1.50" height="1.50" fill="#e8eef4"/>
<rect x="96.80" y="472.20" width="1.50" height="1.50" fill="#e8eef4"/>
<rect x="98.80" y="472.20" width="1.50" height="1.50" fill="#e8eef4"/>
<path d="M113.8 465.2 h3.6 l0.8 1 h5 v6.8 h-9.4z" fill="#f4c542"/>
<rect x="113.80" y="468.40" width="9.40" height="4.60" fill="#f9dc7a"/>
<rect x="115.40" y="470.20" width="6.20" height="2.80" fill="#5aa0d8"/>
<rect x="112.60" y="476.60" width="12.20" height="1.20" fill="#7ab4e6"/>
<ellipse cx="140.2" cy="469.0" rx="4.6" ry="4.8" fill="#a8b0a0"/>
<path d="M136.4 470.0 q3.6 -5.4 7.6 -1.6 q-2.4 4.6 -7.6 1.6z" fill="#e8e4d4"/>
<circle cx="141.6" cy="467.2" r="1.2" fill="#c05a3a"/>
<line x1="142.80" y1="465.00" x2="145.00" y2="463.60" stroke="#d8d8d8" stroke-width="0.70"/>
<ellipse cx="162.4" cy="469.2" rx="4.3" ry="4.5" fill="none" stroke="#de1720" stroke-width="2.1"/>
<rect x="153.00" y="476.80" width="19.00" height="1.20" fill="#5f7f9c"/>
<circle cx="183.8" cy="469.2" r="4.4" fill="#2e0808" stroke="#c81219" stroke-width="1.2"/>
<path d="M181.8 470.8 q1.2 -3.6 3.8 -2.8 q-2.2 0.8 -1.2 3.0" fill="none" stroke="#e0202a" stroke-width="1.00"/>
<rect x="201.60" y="464.80" width="9.00" height="8.80" fill="#1d7044"/>
<rect x="206.20" y="465.60" width="4.40" height="7.20" fill="#a8d4b8"/>
<path d="M206.2 467.4 h4 M206.2 469.2 h4 M206.2 471.0 h4 M208.2 465.6 v7.2" fill="none" stroke="#1d7044" stroke-width="0.40"/>
<text x="202.00" y="471.80" font-size="6.00" fill="#ffffff" font-weight="bold">X</text>
<rect x="199.80" y="476.60" width="12.40" height="1.20" fill="#7ab4e6"/>
<rect x="217.40" y="460.00" width="18.50" height="18.00" fill="#4a4846"/>
<rect x="222.40" y="464.40" width="9.60" height="9.60" fill="#3cc24f" rx="2.00"/>
<path d="M224.8 466.6 L229.8 472.0" fill="none" stroke="#ffffff" stroke-width="1.50"/>
<rect x="217.60" y="476.60" width="18.00" height="1.20" fill="#8ac0ee"/>
<text x="812.00" y="466.00" font-size="3.80" fill="#8a8a8a">0:18</text>
<text x="803.00" y="474.80" font-size="3.80" fill="#8a8a8a">12.11.2020</text>
</svg>
</body></html>
